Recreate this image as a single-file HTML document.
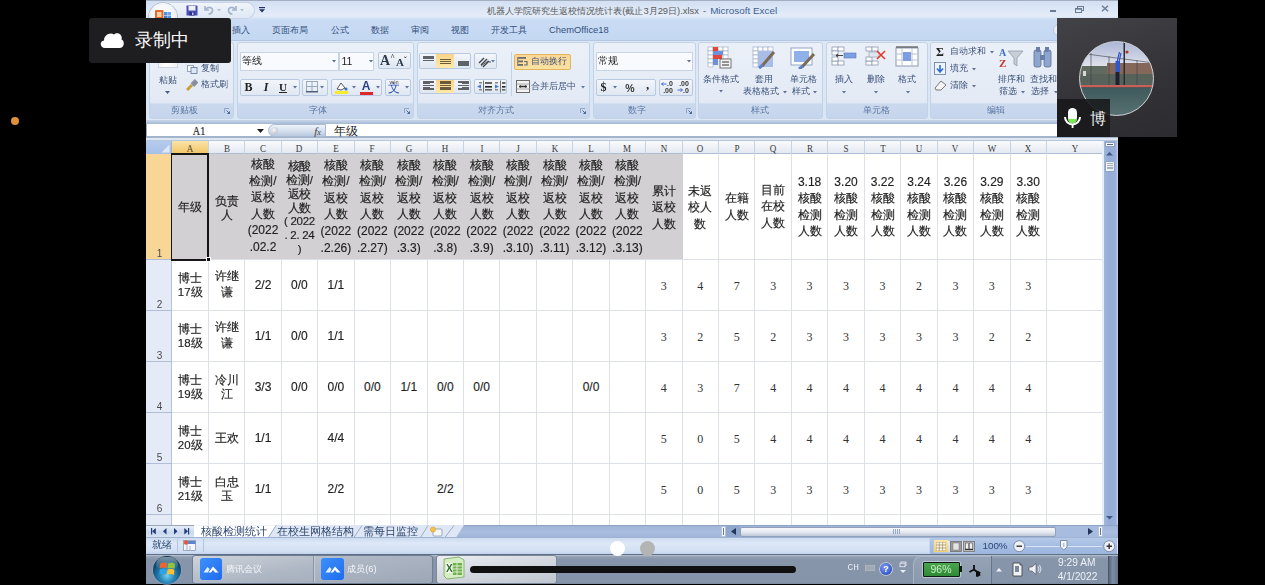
<!DOCTYPE html><html><head><meta charset="utf-8"><style>html,body{margin:0;padding:0}body{width:1265px;height:585px;overflow:hidden;position:relative;background:#000;font-family:"Liberation Sans",sans-serif}</style></head><body><div style="position:absolute;left:0;top:0;width:1265px;height:585px;overflow:hidden;filter:blur(0.35px)"><div style="position:absolute;left:146px;top:0px;width:971.5px;height:19px;background:linear-gradient(#a3afc0 0,#a3afc0 0.8px,#d3e0f3 1.5px,#dbe6f6 8px,#e4ecf8 16px,#d2e0f3 19px);"></div>
<div style="position:absolute;left:146px;top:19px;width:971.5px;height:22px;background:linear-gradient(#cbdcf4,#c4d8f3);border-bottom:1px solid #b3c7e3;box-sizing:border-box;"></div>
<div style="position:absolute;left:146px;top:41px;width:971.5px;height:79px;background:linear-gradient(#dde8f5,#d9e6f5);"></div>
<div style="position:absolute;left:146px;top:119px;width:971.5px;height:22px;background:linear-gradient(#dce8f6 0,#dce8f6 1px,#c3d2e7 1.5px,#aabdd7 4.5px,#fff 4.6px,#fff 17.4px,#a3b5cc 17.5px,#a3b5cc 18.5px,#e2e9f3 18.6px,#dde6f1 21px,#b8c7db 21.1px);"></div>
<div style="position:absolute;left:146px;top:124px;width:0.6px;height:13px;background:#9aaabf;"></div>
<div style="position:absolute;left:146px;top:141px;width:971.5px;height:13px;background:linear-gradient(#f9fafc,#e4e9f1);border-bottom:1px solid #aebfd6;box-sizing:border-box;"></div>
<div style="position:absolute;left:172px;top:154px;width:931px;height:371px;background:#fff;"></div>
<div style="position:absolute;left:146px;top:154px;width:26px;height:371px;background:#e4ebf6;border-right:1px solid #b3c3da;box-sizing:border-box;"></div>
<div style="position:absolute;left:171.6px;top:154px;width:511.19999999999993px;height:105.39999999999998px;background:#d2d0d2;"></div>
<div style="position:absolute;left:208.3px;top:259.4px;width:1px;height:265.6px;background:#dde0e7;"></div>
<div style="position:absolute;left:244.3px;top:259.4px;width:1px;height:265.6px;background:#dde0e7;"></div>
<div style="position:absolute;left:280.74px;top:259.4px;width:1px;height:265.6px;background:#dde0e7;"></div>
<div style="position:absolute;left:317.18px;top:259.4px;width:1px;height:265.6px;background:#dde0e7;"></div>
<div style="position:absolute;left:353.62px;top:259.4px;width:1px;height:265.6px;background:#dde0e7;"></div>
<div style="position:absolute;left:390.06px;top:259.4px;width:1px;height:265.6px;background:#dde0e7;"></div>
<div style="position:absolute;left:426.5px;top:259.4px;width:1px;height:265.6px;background:#dde0e7;"></div>
<div style="position:absolute;left:462.94px;top:259.4px;width:1px;height:265.6px;background:#dde0e7;"></div>
<div style="position:absolute;left:499.38px;top:259.4px;width:1px;height:265.6px;background:#dde0e7;"></div>
<div style="position:absolute;left:535.82px;top:259.4px;width:1px;height:265.6px;background:#dde0e7;"></div>
<div style="position:absolute;left:572.26px;top:259.4px;width:1px;height:265.6px;background:#dde0e7;"></div>
<div style="position:absolute;left:608.7px;top:259.4px;width:1px;height:265.6px;background:#dde0e7;"></div>
<div style="position:absolute;left:645.14px;top:259.4px;width:1px;height:265.6px;background:#dde0e7;"></div>
<div style="position:absolute;left:681.58px;top:259.4px;width:1px;height:265.6px;background:#dde0e7;"></div>
<div style="position:absolute;left:718.02px;top:154px;width:1px;height:371px;background:#dde0e7;"></div>
<div style="position:absolute;left:754.46px;top:154px;width:1px;height:371px;background:#dde0e7;"></div>
<div style="position:absolute;left:790.9px;top:154px;width:1px;height:371px;background:#dde0e7;"></div>
<div style="position:absolute;left:827.34px;top:154px;width:1px;height:371px;background:#dde0e7;"></div>
<div style="position:absolute;left:863.78px;top:154px;width:1px;height:371px;background:#dde0e7;"></div>
<div style="position:absolute;left:900.22px;top:154px;width:1px;height:371px;background:#dde0e7;"></div>
<div style="position:absolute;left:936.66px;top:154px;width:1px;height:371px;background:#dde0e7;"></div>
<div style="position:absolute;left:973.1px;top:154px;width:1px;height:371px;background:#dde0e7;"></div>
<div style="position:absolute;left:1009.54px;top:154px;width:1px;height:371px;background:#dde0e7;"></div>
<div style="position:absolute;left:1045.98px;top:154px;width:1px;height:371px;background:#dde0e7;"></div>
<div style="position:absolute;left:172px;top:258.9px;width:931px;height:1px;background:#dde0e7;"></div>
<div style="position:absolute;left:172px;top:309.9px;width:931px;height:1px;background:#dde0e7;"></div>
<div style="position:absolute;left:172px;top:360.9px;width:931px;height:1px;background:#dde0e7;"></div>
<div style="position:absolute;left:172px;top:411.9px;width:931px;height:1px;background:#dde0e7;"></div>
<div style="position:absolute;left:172px;top:462.9px;width:931px;height:1px;background:#dde0e7;"></div>
<div style="position:absolute;left:172px;top:513.9px;width:931px;height:1px;background:#dde0e7;"></div>
<div style="position:absolute;left:171.6px;top:141px;width:37.20000000000002px;height:13px;background:linear-gradient(#fbe3a8,#f2c76a);border-bottom:1px solid #c99a4a;box-sizing:border-box;"></div>
<div style="position:absolute;left:208.3px;top:141px;width:1px;height:13px;background:#c5d3e6;"></div>
<div style="position:absolute;left:190.2px;top:147.9px;white-space:nowrap;line-height:1;transform:translate(-50%,-50%) scaleX(0.82);font-family:'Liberation Serif',serif;font-size:11px;color:#3a3a3a;color:#5a4a2a;">A</div>
<div style="position:absolute;left:244.3px;top:141px;width:1px;height:13px;background:#c5d3e6;"></div>
<div style="position:absolute;left:226.8px;top:147.9px;white-space:nowrap;line-height:1;transform:translate(-50%,-50%) scaleX(0.82);font-family:'Liberation Serif',serif;font-size:11px;color:#3a3a3a;">B</div>
<div style="position:absolute;left:280.74px;top:141px;width:1px;height:13px;background:#c5d3e6;"></div>
<div style="position:absolute;left:263.02px;top:147.9px;white-space:nowrap;line-height:1;transform:translate(-50%,-50%) scaleX(0.82);font-family:'Liberation Serif',serif;font-size:11px;color:#3a3a3a;">C</div>
<div style="position:absolute;left:317.18px;top:141px;width:1px;height:13px;background:#c5d3e6;"></div>
<div style="position:absolute;left:299.46000000000004px;top:147.9px;white-space:nowrap;line-height:1;transform:translate(-50%,-50%) scaleX(0.82);font-family:'Liberation Serif',serif;font-size:11px;color:#3a3a3a;">D</div>
<div style="position:absolute;left:353.62px;top:141px;width:1px;height:13px;background:#c5d3e6;"></div>
<div style="position:absolute;left:335.9px;top:147.9px;white-space:nowrap;line-height:1;transform:translate(-50%,-50%) scaleX(0.82);font-family:'Liberation Serif',serif;font-size:11px;color:#3a3a3a;">E</div>
<div style="position:absolute;left:390.06px;top:141px;width:1px;height:13px;background:#c5d3e6;"></div>
<div style="position:absolute;left:372.34000000000003px;top:147.9px;white-space:nowrap;line-height:1;transform:translate(-50%,-50%) scaleX(0.82);font-family:'Liberation Serif',serif;font-size:11px;color:#3a3a3a;">F</div>
<div style="position:absolute;left:426.5px;top:141px;width:1px;height:13px;background:#c5d3e6;"></div>
<div style="position:absolute;left:408.78px;top:147.9px;white-space:nowrap;line-height:1;transform:translate(-50%,-50%) scaleX(0.82);font-family:'Liberation Serif',serif;font-size:11px;color:#3a3a3a;">G</div>
<div style="position:absolute;left:462.94px;top:141px;width:1px;height:13px;background:#c5d3e6;"></div>
<div style="position:absolute;left:445.22px;top:147.9px;white-space:nowrap;line-height:1;transform:translate(-50%,-50%) scaleX(0.82);font-family:'Liberation Serif',serif;font-size:11px;color:#3a3a3a;">H</div>
<div style="position:absolute;left:499.38px;top:141px;width:1px;height:13px;background:#c5d3e6;"></div>
<div style="position:absolute;left:481.65999999999997px;top:147.9px;white-space:nowrap;line-height:1;transform:translate(-50%,-50%) scaleX(0.82);font-family:'Liberation Serif',serif;font-size:11px;color:#3a3a3a;">I</div>
<div style="position:absolute;left:535.82px;top:141px;width:1px;height:13px;background:#c5d3e6;"></div>
<div style="position:absolute;left:518.1px;top:147.9px;white-space:nowrap;line-height:1;transform:translate(-50%,-50%) scaleX(0.82);font-family:'Liberation Serif',serif;font-size:11px;color:#3a3a3a;">J</div>
<div style="position:absolute;left:572.26px;top:141px;width:1px;height:13px;background:#c5d3e6;"></div>
<div style="position:absolute;left:554.54px;top:147.9px;white-space:nowrap;line-height:1;transform:translate(-50%,-50%) scaleX(0.82);font-family:'Liberation Serif',serif;font-size:11px;color:#3a3a3a;">K</div>
<div style="position:absolute;left:608.7px;top:141px;width:1px;height:13px;background:#c5d3e6;"></div>
<div style="position:absolute;left:590.98px;top:147.9px;white-space:nowrap;line-height:1;transform:translate(-50%,-50%) scaleX(0.82);font-family:'Liberation Serif',serif;font-size:11px;color:#3a3a3a;">L</div>
<div style="position:absolute;left:645.14px;top:141px;width:1px;height:13px;background:#c5d3e6;"></div>
<div style="position:absolute;left:627.4200000000001px;top:147.9px;white-space:nowrap;line-height:1;transform:translate(-50%,-50%) scaleX(0.82);font-family:'Liberation Serif',serif;font-size:11px;color:#3a3a3a;">M</div>
<div style="position:absolute;left:681.58px;top:141px;width:1px;height:13px;background:#c5d3e6;"></div>
<div style="position:absolute;left:663.86px;top:147.9px;white-space:nowrap;line-height:1;transform:translate(-50%,-50%) scaleX(0.82);font-family:'Liberation Serif',serif;font-size:11px;color:#3a3a3a;">N</div>
<div style="position:absolute;left:718.02px;top:141px;width:1px;height:13px;background:#c5d3e6;"></div>
<div style="position:absolute;left:700.3px;top:147.9px;white-space:nowrap;line-height:1;transform:translate(-50%,-50%) scaleX(0.82);font-family:'Liberation Serif',serif;font-size:11px;color:#3a3a3a;">O</div>
<div style="position:absolute;left:754.46px;top:141px;width:1px;height:13px;background:#c5d3e6;"></div>
<div style="position:absolute;left:736.74px;top:147.9px;white-space:nowrap;line-height:1;transform:translate(-50%,-50%) scaleX(0.82);font-family:'Liberation Serif',serif;font-size:11px;color:#3a3a3a;">P</div>
<div style="position:absolute;left:790.9px;top:141px;width:1px;height:13px;background:#c5d3e6;"></div>
<div style="position:absolute;left:773.1800000000001px;top:147.9px;white-space:nowrap;line-height:1;transform:translate(-50%,-50%) scaleX(0.82);font-family:'Liberation Serif',serif;font-size:11px;color:#3a3a3a;">Q</div>
<div style="position:absolute;left:827.34px;top:141px;width:1px;height:13px;background:#c5d3e6;"></div>
<div style="position:absolute;left:809.62px;top:147.9px;white-space:nowrap;line-height:1;transform:translate(-50%,-50%) scaleX(0.82);font-family:'Liberation Serif',serif;font-size:11px;color:#3a3a3a;">R</div>
<div style="position:absolute;left:863.78px;top:141px;width:1px;height:13px;background:#c5d3e6;"></div>
<div style="position:absolute;left:846.06px;top:147.9px;white-space:nowrap;line-height:1;transform:translate(-50%,-50%) scaleX(0.82);font-family:'Liberation Serif',serif;font-size:11px;color:#3a3a3a;">S</div>
<div style="position:absolute;left:900.22px;top:141px;width:1px;height:13px;background:#c5d3e6;"></div>
<div style="position:absolute;left:882.5px;top:147.9px;white-space:nowrap;line-height:1;transform:translate(-50%,-50%) scaleX(0.82);font-family:'Liberation Serif',serif;font-size:11px;color:#3a3a3a;">T</div>
<div style="position:absolute;left:936.66px;top:141px;width:1px;height:13px;background:#c5d3e6;"></div>
<div style="position:absolute;left:918.94px;top:147.9px;white-space:nowrap;line-height:1;transform:translate(-50%,-50%) scaleX(0.82);font-family:'Liberation Serif',serif;font-size:11px;color:#3a3a3a;">U</div>
<div style="position:absolute;left:973.1px;top:141px;width:1px;height:13px;background:#c5d3e6;"></div>
<div style="position:absolute;left:955.38px;top:147.9px;white-space:nowrap;line-height:1;transform:translate(-50%,-50%) scaleX(0.82);font-family:'Liberation Serif',serif;font-size:11px;color:#3a3a3a;">V</div>
<div style="position:absolute;left:1009.54px;top:141px;width:1px;height:13px;background:#c5d3e6;"></div>
<div style="position:absolute;left:991.8199999999999px;top:147.9px;white-space:nowrap;line-height:1;transform:translate(-50%,-50%) scaleX(0.82);font-family:'Liberation Serif',serif;font-size:11px;color:#3a3a3a;">W</div>
<div style="position:absolute;left:1045.98px;top:141px;width:1px;height:13px;background:#c5d3e6;"></div>
<div style="position:absolute;left:1028.26px;top:147.9px;white-space:nowrap;line-height:1;transform:translate(-50%,-50%) scaleX(0.82);font-family:'Liberation Serif',serif;font-size:11px;color:#3a3a3a;">X</div>
<div style="position:absolute;left:1102.9px;top:141px;width:1px;height:13px;background:#c5d3e6;"></div>
<div style="position:absolute;left:1074.94px;top:147.9px;white-space:nowrap;line-height:1;transform:translate(-50%,-50%) scaleX(0.82);font-family:'Liberation Serif',serif;font-size:11px;color:#3a3a3a;">Y</div>
<div style="position:absolute;left:146px;top:141px;width:26px;height:13px;background:linear-gradient(#b4cbec,#a6c0e8);border-right:1px solid #9eb5d2;box-sizing:border-box;"></div>
<svg style="position:absolute;left:161px;top:143.5px" width="9" height="9"><polygon points="8.5,0.5 8.5,8.5 0.5,8.5" fill="#dfe8f6"/></svg>
<div style="position:absolute;left:146px;top:154px;width:25px;height:105.39999999999998px;background:#f8d796;"></div>
<div style="position:absolute;left:146px;top:258.9px;width:26px;height:1px;background:#b0bfd6;"></div>
<div style="position:absolute;left:159.5px;top:253.89999999999998px;white-space:nowrap;line-height:1;transform:translate(-50%,-50%);font-family:'Liberation Sans',sans-serif;font-size:10px;color:#4a4a4a;">1</div>
<div style="position:absolute;left:146px;top:309.9px;width:26px;height:1px;background:#b0bfd6;"></div>
<div style="position:absolute;left:159.5px;top:304.9px;white-space:nowrap;line-height:1;transform:translate(-50%,-50%);font-family:'Liberation Sans',sans-serif;font-size:10px;color:#4a4a4a;">2</div>
<div style="position:absolute;left:146px;top:360.9px;width:26px;height:1px;background:#b0bfd6;"></div>
<div style="position:absolute;left:159.5px;top:355.9px;white-space:nowrap;line-height:1;transform:translate(-50%,-50%);font-family:'Liberation Sans',sans-serif;font-size:10px;color:#4a4a4a;">3</div>
<div style="position:absolute;left:146px;top:411.9px;width:26px;height:1px;background:#b0bfd6;"></div>
<div style="position:absolute;left:159.5px;top:406.9px;white-space:nowrap;line-height:1;transform:translate(-50%,-50%);font-family:'Liberation Sans',sans-serif;font-size:10px;color:#4a4a4a;">4</div>
<div style="position:absolute;left:146px;top:462.9px;width:26px;height:1px;background:#b0bfd6;"></div>
<div style="position:absolute;left:159.5px;top:457.9px;white-space:nowrap;line-height:1;transform:translate(-50%,-50%);font-family:'Liberation Sans',sans-serif;font-size:10px;color:#4a4a4a;">5</div>
<div style="position:absolute;left:146px;top:513.9px;width:26px;height:1px;background:#b0bfd6;"></div>
<div style="position:absolute;left:159.5px;top:508.9px;white-space:nowrap;line-height:1;transform:translate(-50%,-50%);font-family:'Liberation Sans',sans-serif;font-size:10px;color:#4a4a4a;">6</div>
<div style="position:absolute;left:146px;top:524.5px;width:26px;height:1px;background:#b0bfd6;"></div>
<div style="position:absolute;left:171.29999999999998px;top:153.2px;width:38.000000000000014px;height:107.49999999999999px;border:2px solid #161616;border-left-width:1.6px;box-sizing:border-box;"></div>
<div style="position:absolute;left:206.3px;top:256.9px;width:5px;height:5px;background:#111;border:1px solid #fff;box-sizing:border-box;"></div>
<div style="position:absolute;left:190.2px;top:206.5px;white-space:nowrap;line-height:1;transform:translate(-50%,-50%);font-family:'Liberation Sans',sans-serif;font-size:12px;color:#1e1e1e;-webkit-text-stroke:0.2px rgba(30,30,30,0.8);">年级</div>
<div style="position:absolute;left:226.8px;top:200.8px;white-space:nowrap;line-height:1;transform:translate(-50%,-50%);font-family:'Liberation Sans',sans-serif;font-size:12px;color:#1e1e1e;-webkit-text-stroke:0.2px rgba(30,30,30,0.8);">负责</div>
<div style="position:absolute;left:226.8px;top:215.2px;white-space:nowrap;line-height:1;transform:translate(-50%,-50%);font-family:'Liberation Sans',sans-serif;font-size:12px;color:#1e1e1e;-webkit-text-stroke:0.2px rgba(30,30,30,0.8);">人</div>
<div style="position:absolute;left:263.02px;top:164.0px;white-space:nowrap;line-height:1;transform:translate(-50%,-50%);font-family:'Liberation Sans',sans-serif;font-size:12px;color:#1e1e1e;-webkit-text-stroke:0.2px rgba(30,30,30,0.8);">核酸</div>
<div style="position:absolute;left:263.02px;top:180.6px;white-space:nowrap;line-height:1;transform:translate(-50%,-50%);font-family:'Liberation Sans',sans-serif;font-size:12px;color:#1e1e1e;-webkit-text-stroke:0.2px rgba(30,30,30,0.8);">检测/</div>
<div style="position:absolute;left:263.02px;top:197.2px;white-space:nowrap;line-height:1;transform:translate(-50%,-50%);font-family:'Liberation Sans',sans-serif;font-size:12px;color:#1e1e1e;-webkit-text-stroke:0.2px rgba(30,30,30,0.8);">返校</div>
<div style="position:absolute;left:263.02px;top:213.8px;white-space:nowrap;line-height:1;transform:translate(-50%,-50%);font-family:'Liberation Sans',sans-serif;font-size:12px;color:#1e1e1e;-webkit-text-stroke:0.2px rgba(30,30,30,0.8);">人数</div>
<div style="position:absolute;left:263.02px;top:230.4px;white-space:nowrap;line-height:1;transform:translate(-50%,-50%);font-family:'Liberation Sans',sans-serif;font-size:12px;color:#1e1e1e;-webkit-text-stroke:0.2px rgba(30,30,30,0.8);">(2022</div>
<div style="position:absolute;left:263.02px;top:247.0px;white-space:nowrap;line-height:1;transform:translate(-50%,-50%);font-family:'Liberation Sans',sans-serif;font-size:12px;color:#1e1e1e;-webkit-text-stroke:0.2px rgba(30,30,30,0.8);">.02.2</div>
<div style="position:absolute;left:299.46000000000004px;top:167.4px;white-space:nowrap;line-height:1;transform:translate(-50%,-50%);font-family:'Liberation Sans',sans-serif;font-size:12px;color:#1e1e1e;-webkit-text-stroke:0.2px rgba(30,30,30,0.8);font-size:11.5px;letter-spacing:-0.3px;">核酸</div>
<div style="position:absolute;left:299.46000000000004px;top:181.1px;white-space:nowrap;line-height:1;transform:translate(-50%,-50%);font-family:'Liberation Sans',sans-serif;font-size:12px;color:#1e1e1e;-webkit-text-stroke:0.2px rgba(30,30,30,0.8);font-size:11.5px;letter-spacing:-0.3px;">检测/</div>
<div style="position:absolute;left:299.46000000000004px;top:194.8px;white-space:nowrap;line-height:1;transform:translate(-50%,-50%);font-family:'Liberation Sans',sans-serif;font-size:12px;color:#1e1e1e;-webkit-text-stroke:0.2px rgba(30,30,30,0.8);font-size:11.5px;letter-spacing:-0.3px;">返校</div>
<div style="position:absolute;left:299.46000000000004px;top:208.5px;white-space:nowrap;line-height:1;transform:translate(-50%,-50%);font-family:'Liberation Sans',sans-serif;font-size:12px;color:#1e1e1e;-webkit-text-stroke:0.2px rgba(30,30,30,0.8);font-size:11.5px;letter-spacing:-0.3px;">人数</div>
<div style="position:absolute;left:299.46000000000004px;top:222.2px;white-space:nowrap;line-height:1;transform:translate(-50%,-50%);font-family:'Liberation Sans',sans-serif;font-size:12px;color:#1e1e1e;-webkit-text-stroke:0.2px rgba(30,30,30,0.8);font-size:11.5px;letter-spacing:-0.3px;">(&nbsp;2022</div>
<div style="position:absolute;left:299.46000000000004px;top:235.9px;white-space:nowrap;line-height:1;transform:translate(-50%,-50%);font-family:'Liberation Sans',sans-serif;font-size:12px;color:#1e1e1e;-webkit-text-stroke:0.2px rgba(30,30,30,0.8);font-size:11.5px;letter-spacing:-0.3px;">.&nbsp;2.&nbsp;24</div>
<div style="position:absolute;left:299.46000000000004px;top:249.6px;white-space:nowrap;line-height:1;transform:translate(-50%,-50%);font-family:'Liberation Sans',sans-serif;font-size:12px;color:#1e1e1e;-webkit-text-stroke:0.2px rgba(30,30,30,0.8);font-size:11.5px;letter-spacing:-0.3px;">)</div>
<div style="position:absolute;left:335.9px;top:164.5px;white-space:nowrap;line-height:1;transform:translate(-50%,-50%);font-family:'Liberation Sans',sans-serif;font-size:12px;color:#1e1e1e;-webkit-text-stroke:0.2px rgba(30,30,30,0.8);">核酸</div>
<div style="position:absolute;left:335.9px;top:181.1px;white-space:nowrap;line-height:1;transform:translate(-50%,-50%);font-family:'Liberation Sans',sans-serif;font-size:12px;color:#1e1e1e;-webkit-text-stroke:0.2px rgba(30,30,30,0.8);">检测/</div>
<div style="position:absolute;left:335.9px;top:197.7px;white-space:nowrap;line-height:1;transform:translate(-50%,-50%);font-family:'Liberation Sans',sans-serif;font-size:12px;color:#1e1e1e;-webkit-text-stroke:0.2px rgba(30,30,30,0.8);">返校</div>
<div style="position:absolute;left:335.9px;top:214.3px;white-space:nowrap;line-height:1;transform:translate(-50%,-50%);font-family:'Liberation Sans',sans-serif;font-size:12px;color:#1e1e1e;-webkit-text-stroke:0.2px rgba(30,30,30,0.8);">人数</div>
<div style="position:absolute;left:335.9px;top:230.9px;white-space:nowrap;line-height:1;transform:translate(-50%,-50%);font-family:'Liberation Sans',sans-serif;font-size:12px;color:#1e1e1e;-webkit-text-stroke:0.2px rgba(30,30,30,0.8);">(2022</div>
<div style="position:absolute;left:335.9px;top:247.5px;white-space:nowrap;line-height:1;transform:translate(-50%,-50%);font-family:'Liberation Sans',sans-serif;font-size:12px;color:#1e1e1e;-webkit-text-stroke:0.2px rgba(30,30,30,0.8);">.2.26)</div>
<div style="position:absolute;left:372.34000000000003px;top:164.5px;white-space:nowrap;line-height:1;transform:translate(-50%,-50%);font-family:'Liberation Sans',sans-serif;font-size:12px;color:#1e1e1e;-webkit-text-stroke:0.2px rgba(30,30,30,0.8);">核酸</div>
<div style="position:absolute;left:372.34000000000003px;top:181.1px;white-space:nowrap;line-height:1;transform:translate(-50%,-50%);font-family:'Liberation Sans',sans-serif;font-size:12px;color:#1e1e1e;-webkit-text-stroke:0.2px rgba(30,30,30,0.8);">检测/</div>
<div style="position:absolute;left:372.34000000000003px;top:197.7px;white-space:nowrap;line-height:1;transform:translate(-50%,-50%);font-family:'Liberation Sans',sans-serif;font-size:12px;color:#1e1e1e;-webkit-text-stroke:0.2px rgba(30,30,30,0.8);">返校</div>
<div style="position:absolute;left:372.34000000000003px;top:214.3px;white-space:nowrap;line-height:1;transform:translate(-50%,-50%);font-family:'Liberation Sans',sans-serif;font-size:12px;color:#1e1e1e;-webkit-text-stroke:0.2px rgba(30,30,30,0.8);">人数</div>
<div style="position:absolute;left:372.34000000000003px;top:230.9px;white-space:nowrap;line-height:1;transform:translate(-50%,-50%);font-family:'Liberation Sans',sans-serif;font-size:12px;color:#1e1e1e;-webkit-text-stroke:0.2px rgba(30,30,30,0.8);">(2022</div>
<div style="position:absolute;left:372.34000000000003px;top:247.5px;white-space:nowrap;line-height:1;transform:translate(-50%,-50%);font-family:'Liberation Sans',sans-serif;font-size:12px;color:#1e1e1e;-webkit-text-stroke:0.2px rgba(30,30,30,0.8);">.2.27)</div>
<div style="position:absolute;left:408.78px;top:164.5px;white-space:nowrap;line-height:1;transform:translate(-50%,-50%);font-family:'Liberation Sans',sans-serif;font-size:12px;color:#1e1e1e;-webkit-text-stroke:0.2px rgba(30,30,30,0.8);">核酸</div>
<div style="position:absolute;left:408.78px;top:181.1px;white-space:nowrap;line-height:1;transform:translate(-50%,-50%);font-family:'Liberation Sans',sans-serif;font-size:12px;color:#1e1e1e;-webkit-text-stroke:0.2px rgba(30,30,30,0.8);">检测/</div>
<div style="position:absolute;left:408.78px;top:197.7px;white-space:nowrap;line-height:1;transform:translate(-50%,-50%);font-family:'Liberation Sans',sans-serif;font-size:12px;color:#1e1e1e;-webkit-text-stroke:0.2px rgba(30,30,30,0.8);">返校</div>
<div style="position:absolute;left:408.78px;top:214.3px;white-space:nowrap;line-height:1;transform:translate(-50%,-50%);font-family:'Liberation Sans',sans-serif;font-size:12px;color:#1e1e1e;-webkit-text-stroke:0.2px rgba(30,30,30,0.8);">人数</div>
<div style="position:absolute;left:408.78px;top:230.9px;white-space:nowrap;line-height:1;transform:translate(-50%,-50%);font-family:'Liberation Sans',sans-serif;font-size:12px;color:#1e1e1e;-webkit-text-stroke:0.2px rgba(30,30,30,0.8);">(2022</div>
<div style="position:absolute;left:408.78px;top:247.5px;white-space:nowrap;line-height:1;transform:translate(-50%,-50%);font-family:'Liberation Sans',sans-serif;font-size:12px;color:#1e1e1e;-webkit-text-stroke:0.2px rgba(30,30,30,0.8);">.3.3)</div>
<div style="position:absolute;left:445.22px;top:164.5px;white-space:nowrap;line-height:1;transform:translate(-50%,-50%);font-family:'Liberation Sans',sans-serif;font-size:12px;color:#1e1e1e;-webkit-text-stroke:0.2px rgba(30,30,30,0.8);">核酸</div>
<div style="position:absolute;left:445.22px;top:181.1px;white-space:nowrap;line-height:1;transform:translate(-50%,-50%);font-family:'Liberation Sans',sans-serif;font-size:12px;color:#1e1e1e;-webkit-text-stroke:0.2px rgba(30,30,30,0.8);">检测/</div>
<div style="position:absolute;left:445.22px;top:197.7px;white-space:nowrap;line-height:1;transform:translate(-50%,-50%);font-family:'Liberation Sans',sans-serif;font-size:12px;color:#1e1e1e;-webkit-text-stroke:0.2px rgba(30,30,30,0.8);">返校</div>
<div style="position:absolute;left:445.22px;top:214.3px;white-space:nowrap;line-height:1;transform:translate(-50%,-50%);font-family:'Liberation Sans',sans-serif;font-size:12px;color:#1e1e1e;-webkit-text-stroke:0.2px rgba(30,30,30,0.8);">人数</div>
<div style="position:absolute;left:445.22px;top:230.9px;white-space:nowrap;line-height:1;transform:translate(-50%,-50%);font-family:'Liberation Sans',sans-serif;font-size:12px;color:#1e1e1e;-webkit-text-stroke:0.2px rgba(30,30,30,0.8);">(2022</div>
<div style="position:absolute;left:445.22px;top:247.5px;white-space:nowrap;line-height:1;transform:translate(-50%,-50%);font-family:'Liberation Sans',sans-serif;font-size:12px;color:#1e1e1e;-webkit-text-stroke:0.2px rgba(30,30,30,0.8);">.3.8)</div>
<div style="position:absolute;left:481.65999999999997px;top:164.5px;white-space:nowrap;line-height:1;transform:translate(-50%,-50%);font-family:'Liberation Sans',sans-serif;font-size:12px;color:#1e1e1e;-webkit-text-stroke:0.2px rgba(30,30,30,0.8);">核酸</div>
<div style="position:absolute;left:481.65999999999997px;top:181.1px;white-space:nowrap;line-height:1;transform:translate(-50%,-50%);font-family:'Liberation Sans',sans-serif;font-size:12px;color:#1e1e1e;-webkit-text-stroke:0.2px rgba(30,30,30,0.8);">检测/</div>
<div style="position:absolute;left:481.65999999999997px;top:197.7px;white-space:nowrap;line-height:1;transform:translate(-50%,-50%);font-family:'Liberation Sans',sans-serif;font-size:12px;color:#1e1e1e;-webkit-text-stroke:0.2px rgba(30,30,30,0.8);">返校</div>
<div style="position:absolute;left:481.65999999999997px;top:214.3px;white-space:nowrap;line-height:1;transform:translate(-50%,-50%);font-family:'Liberation Sans',sans-serif;font-size:12px;color:#1e1e1e;-webkit-text-stroke:0.2px rgba(30,30,30,0.8);">人数</div>
<div style="position:absolute;left:481.65999999999997px;top:230.9px;white-space:nowrap;line-height:1;transform:translate(-50%,-50%);font-family:'Liberation Sans',sans-serif;font-size:12px;color:#1e1e1e;-webkit-text-stroke:0.2px rgba(30,30,30,0.8);">(2022</div>
<div style="position:absolute;left:481.65999999999997px;top:247.5px;white-space:nowrap;line-height:1;transform:translate(-50%,-50%);font-family:'Liberation Sans',sans-serif;font-size:12px;color:#1e1e1e;-webkit-text-stroke:0.2px rgba(30,30,30,0.8);">.3.9)</div>
<div style="position:absolute;left:518.1px;top:164.5px;white-space:nowrap;line-height:1;transform:translate(-50%,-50%);font-family:'Liberation Sans',sans-serif;font-size:12px;color:#1e1e1e;-webkit-text-stroke:0.2px rgba(30,30,30,0.8);">核酸</div>
<div style="position:absolute;left:518.1px;top:181.1px;white-space:nowrap;line-height:1;transform:translate(-50%,-50%);font-family:'Liberation Sans',sans-serif;font-size:12px;color:#1e1e1e;-webkit-text-stroke:0.2px rgba(30,30,30,0.8);">检测/</div>
<div style="position:absolute;left:518.1px;top:197.7px;white-space:nowrap;line-height:1;transform:translate(-50%,-50%);font-family:'Liberation Sans',sans-serif;font-size:12px;color:#1e1e1e;-webkit-text-stroke:0.2px rgba(30,30,30,0.8);">返校</div>
<div style="position:absolute;left:518.1px;top:214.3px;white-space:nowrap;line-height:1;transform:translate(-50%,-50%);font-family:'Liberation Sans',sans-serif;font-size:12px;color:#1e1e1e;-webkit-text-stroke:0.2px rgba(30,30,30,0.8);">人数</div>
<div style="position:absolute;left:518.1px;top:230.9px;white-space:nowrap;line-height:1;transform:translate(-50%,-50%);font-family:'Liberation Sans',sans-serif;font-size:12px;color:#1e1e1e;-webkit-text-stroke:0.2px rgba(30,30,30,0.8);">(2022</div>
<div style="position:absolute;left:518.1px;top:247.5px;white-space:nowrap;line-height:1;transform:translate(-50%,-50%);font-family:'Liberation Sans',sans-serif;font-size:12px;color:#1e1e1e;-webkit-text-stroke:0.2px rgba(30,30,30,0.8);">.3.10)</div>
<div style="position:absolute;left:554.54px;top:164.5px;white-space:nowrap;line-height:1;transform:translate(-50%,-50%);font-family:'Liberation Sans',sans-serif;font-size:12px;color:#1e1e1e;-webkit-text-stroke:0.2px rgba(30,30,30,0.8);">核酸</div>
<div style="position:absolute;left:554.54px;top:181.1px;white-space:nowrap;line-height:1;transform:translate(-50%,-50%);font-family:'Liberation Sans',sans-serif;font-size:12px;color:#1e1e1e;-webkit-text-stroke:0.2px rgba(30,30,30,0.8);">检测/</div>
<div style="position:absolute;left:554.54px;top:197.7px;white-space:nowrap;line-height:1;transform:translate(-50%,-50%);font-family:'Liberation Sans',sans-serif;font-size:12px;color:#1e1e1e;-webkit-text-stroke:0.2px rgba(30,30,30,0.8);">返校</div>
<div style="position:absolute;left:554.54px;top:214.3px;white-space:nowrap;line-height:1;transform:translate(-50%,-50%);font-family:'Liberation Sans',sans-serif;font-size:12px;color:#1e1e1e;-webkit-text-stroke:0.2px rgba(30,30,30,0.8);">人数</div>
<div style="position:absolute;left:554.54px;top:230.9px;white-space:nowrap;line-height:1;transform:translate(-50%,-50%);font-family:'Liberation Sans',sans-serif;font-size:12px;color:#1e1e1e;-webkit-text-stroke:0.2px rgba(30,30,30,0.8);">(2022</div>
<div style="position:absolute;left:554.54px;top:247.5px;white-space:nowrap;line-height:1;transform:translate(-50%,-50%);font-family:'Liberation Sans',sans-serif;font-size:12px;color:#1e1e1e;-webkit-text-stroke:0.2px rgba(30,30,30,0.8);">.3.11)</div>
<div style="position:absolute;left:590.98px;top:164.5px;white-space:nowrap;line-height:1;transform:translate(-50%,-50%);font-family:'Liberation Sans',sans-serif;font-size:12px;color:#1e1e1e;-webkit-text-stroke:0.2px rgba(30,30,30,0.8);">核酸</div>
<div style="position:absolute;left:590.98px;top:181.1px;white-space:nowrap;line-height:1;transform:translate(-50%,-50%);font-family:'Liberation Sans',sans-serif;font-size:12px;color:#1e1e1e;-webkit-text-stroke:0.2px rgba(30,30,30,0.8);">检测/</div>
<div style="position:absolute;left:590.98px;top:197.7px;white-space:nowrap;line-height:1;transform:translate(-50%,-50%);font-family:'Liberation Sans',sans-serif;font-size:12px;color:#1e1e1e;-webkit-text-stroke:0.2px rgba(30,30,30,0.8);">返校</div>
<div style="position:absolute;left:590.98px;top:214.3px;white-space:nowrap;line-height:1;transform:translate(-50%,-50%);font-family:'Liberation Sans',sans-serif;font-size:12px;color:#1e1e1e;-webkit-text-stroke:0.2px rgba(30,30,30,0.8);">人数</div>
<div style="position:absolute;left:590.98px;top:230.9px;white-space:nowrap;line-height:1;transform:translate(-50%,-50%);font-family:'Liberation Sans',sans-serif;font-size:12px;color:#1e1e1e;-webkit-text-stroke:0.2px rgba(30,30,30,0.8);">(2022</div>
<div style="position:absolute;left:590.98px;top:247.5px;white-space:nowrap;line-height:1;transform:translate(-50%,-50%);font-family:'Liberation Sans',sans-serif;font-size:12px;color:#1e1e1e;-webkit-text-stroke:0.2px rgba(30,30,30,0.8);">.3.12)</div>
<div style="position:absolute;left:627.4200000000001px;top:164.5px;white-space:nowrap;line-height:1;transform:translate(-50%,-50%);font-family:'Liberation Sans',sans-serif;font-size:12px;color:#1e1e1e;-webkit-text-stroke:0.2px rgba(30,30,30,0.8);">核酸</div>
<div style="position:absolute;left:627.4200000000001px;top:181.1px;white-space:nowrap;line-height:1;transform:translate(-50%,-50%);font-family:'Liberation Sans',sans-serif;font-size:12px;color:#1e1e1e;-webkit-text-stroke:0.2px rgba(30,30,30,0.8);">检测/</div>
<div style="position:absolute;left:627.4200000000001px;top:197.7px;white-space:nowrap;line-height:1;transform:translate(-50%,-50%);font-family:'Liberation Sans',sans-serif;font-size:12px;color:#1e1e1e;-webkit-text-stroke:0.2px rgba(30,30,30,0.8);">返校</div>
<div style="position:absolute;left:627.4200000000001px;top:214.3px;white-space:nowrap;line-height:1;transform:translate(-50%,-50%);font-family:'Liberation Sans',sans-serif;font-size:12px;color:#1e1e1e;-webkit-text-stroke:0.2px rgba(30,30,30,0.8);">人数</div>
<div style="position:absolute;left:627.4200000000001px;top:230.9px;white-space:nowrap;line-height:1;transform:translate(-50%,-50%);font-family:'Liberation Sans',sans-serif;font-size:12px;color:#1e1e1e;-webkit-text-stroke:0.2px rgba(30,30,30,0.8);">(2022</div>
<div style="position:absolute;left:627.4200000000001px;top:247.5px;white-space:nowrap;line-height:1;transform:translate(-50%,-50%);font-family:'Liberation Sans',sans-serif;font-size:12px;color:#1e1e1e;-webkit-text-stroke:0.2px rgba(30,30,30,0.8);">.3.13)</div>
<div style="position:absolute;left:663.86px;top:190.70000000000002px;white-space:nowrap;line-height:1;transform:translate(-50%,-50%);font-family:'Liberation Sans',sans-serif;font-size:12px;color:#1e1e1e;-webkit-text-stroke:0.2px rgba(30,30,30,0.8);">累计</div>
<div style="position:absolute;left:663.86px;top:207.3px;white-space:nowrap;line-height:1;transform:translate(-50%,-50%);font-family:'Liberation Sans',sans-serif;font-size:12px;color:#1e1e1e;-webkit-text-stroke:0.2px rgba(30,30,30,0.8);">返校</div>
<div style="position:absolute;left:663.86px;top:223.9px;white-space:nowrap;line-height:1;transform:translate(-50%,-50%);font-family:'Liberation Sans',sans-serif;font-size:12px;color:#1e1e1e;-webkit-text-stroke:0.2px rgba(30,30,30,0.8);">人数</div>
<div style="position:absolute;left:700.3px;top:190.70000000000002px;white-space:nowrap;line-height:1;transform:translate(-50%,-50%);font-family:'Liberation Sans',sans-serif;font-size:12px;color:#1e1e1e;-webkit-text-stroke:0.2px rgba(30,30,30,0.8);">未返</div>
<div style="position:absolute;left:700.3px;top:207.3px;white-space:nowrap;line-height:1;transform:translate(-50%,-50%);font-family:'Liberation Sans',sans-serif;font-size:12px;color:#1e1e1e;-webkit-text-stroke:0.2px rgba(30,30,30,0.8);">校人</div>
<div style="position:absolute;left:700.3px;top:223.9px;white-space:nowrap;line-height:1;transform:translate(-50%,-50%);font-family:'Liberation Sans',sans-serif;font-size:12px;color:#1e1e1e;-webkit-text-stroke:0.2px rgba(30,30,30,0.8);">数</div>
<div style="position:absolute;left:736.74px;top:198.1px;white-space:nowrap;line-height:1;transform:translate(-50%,-50%);font-family:'Liberation Sans',sans-serif;font-size:12px;color:#1e1e1e;-webkit-text-stroke:0.2px rgba(30,30,30,0.8);">在籍</div>
<div style="position:absolute;left:736.74px;top:214.70000000000002px;white-space:nowrap;line-height:1;transform:translate(-50%,-50%);font-family:'Liberation Sans',sans-serif;font-size:12px;color:#1e1e1e;-webkit-text-stroke:0.2px rgba(30,30,30,0.8);">人数</div>
<div style="position:absolute;left:773.1800000000001px;top:189.8px;white-space:nowrap;line-height:1;transform:translate(-50%,-50%);font-family:'Liberation Sans',sans-serif;font-size:12px;color:#1e1e1e;-webkit-text-stroke:0.2px rgba(30,30,30,0.8);">目前</div>
<div style="position:absolute;left:773.1800000000001px;top:206.4px;white-space:nowrap;line-height:1;transform:translate(-50%,-50%);font-family:'Liberation Sans',sans-serif;font-size:12px;color:#1e1e1e;-webkit-text-stroke:0.2px rgba(30,30,30,0.8);">在校</div>
<div style="position:absolute;left:773.1800000000001px;top:223.0px;white-space:nowrap;line-height:1;transform:translate(-50%,-50%);font-family:'Liberation Sans',sans-serif;font-size:12px;color:#1e1e1e;-webkit-text-stroke:0.2px rgba(30,30,30,0.8);">人数</div>
<div style="position:absolute;left:809.62px;top:181.5px;white-space:nowrap;line-height:1;transform:translate(-50%,-50%);font-family:'Liberation Sans',sans-serif;font-size:12px;color:#1e1e1e;-webkit-text-stroke:0.2px rgba(30,30,30,0.8);">3.18</div>
<div style="position:absolute;left:809.62px;top:198.1px;white-space:nowrap;line-height:1;transform:translate(-50%,-50%);font-family:'Liberation Sans',sans-serif;font-size:12px;color:#1e1e1e;-webkit-text-stroke:0.2px rgba(30,30,30,0.8);">核酸</div>
<div style="position:absolute;left:809.62px;top:214.70000000000002px;white-space:nowrap;line-height:1;transform:translate(-50%,-50%);font-family:'Liberation Sans',sans-serif;font-size:12px;color:#1e1e1e;-webkit-text-stroke:0.2px rgba(30,30,30,0.8);">检测</div>
<div style="position:absolute;left:809.62px;top:231.3px;white-space:nowrap;line-height:1;transform:translate(-50%,-50%);font-family:'Liberation Sans',sans-serif;font-size:12px;color:#1e1e1e;-webkit-text-stroke:0.2px rgba(30,30,30,0.8);">人数</div>
<div style="position:absolute;left:846.06px;top:181.5px;white-space:nowrap;line-height:1;transform:translate(-50%,-50%);font-family:'Liberation Sans',sans-serif;font-size:12px;color:#1e1e1e;-webkit-text-stroke:0.2px rgba(30,30,30,0.8);">3.20</div>
<div style="position:absolute;left:846.06px;top:198.1px;white-space:nowrap;line-height:1;transform:translate(-50%,-50%);font-family:'Liberation Sans',sans-serif;font-size:12px;color:#1e1e1e;-webkit-text-stroke:0.2px rgba(30,30,30,0.8);">核酸</div>
<div style="position:absolute;left:846.06px;top:214.70000000000002px;white-space:nowrap;line-height:1;transform:translate(-50%,-50%);font-family:'Liberation Sans',sans-serif;font-size:12px;color:#1e1e1e;-webkit-text-stroke:0.2px rgba(30,30,30,0.8);">检测</div>
<div style="position:absolute;left:846.06px;top:231.3px;white-space:nowrap;line-height:1;transform:translate(-50%,-50%);font-family:'Liberation Sans',sans-serif;font-size:12px;color:#1e1e1e;-webkit-text-stroke:0.2px rgba(30,30,30,0.8);">人数</div>
<div style="position:absolute;left:882.5px;top:181.5px;white-space:nowrap;line-height:1;transform:translate(-50%,-50%);font-family:'Liberation Sans',sans-serif;font-size:12px;color:#1e1e1e;-webkit-text-stroke:0.2px rgba(30,30,30,0.8);">3.22</div>
<div style="position:absolute;left:882.5px;top:198.1px;white-space:nowrap;line-height:1;transform:translate(-50%,-50%);font-family:'Liberation Sans',sans-serif;font-size:12px;color:#1e1e1e;-webkit-text-stroke:0.2px rgba(30,30,30,0.8);">核酸</div>
<div style="position:absolute;left:882.5px;top:214.70000000000002px;white-space:nowrap;line-height:1;transform:translate(-50%,-50%);font-family:'Liberation Sans',sans-serif;font-size:12px;color:#1e1e1e;-webkit-text-stroke:0.2px rgba(30,30,30,0.8);">检测</div>
<div style="position:absolute;left:882.5px;top:231.3px;white-space:nowrap;line-height:1;transform:translate(-50%,-50%);font-family:'Liberation Sans',sans-serif;font-size:12px;color:#1e1e1e;-webkit-text-stroke:0.2px rgba(30,30,30,0.8);">人数</div>
<div style="position:absolute;left:918.94px;top:181.5px;white-space:nowrap;line-height:1;transform:translate(-50%,-50%);font-family:'Liberation Sans',sans-serif;font-size:12px;color:#1e1e1e;-webkit-text-stroke:0.2px rgba(30,30,30,0.8);">3.24</div>
<div style="position:absolute;left:918.94px;top:198.1px;white-space:nowrap;line-height:1;transform:translate(-50%,-50%);font-family:'Liberation Sans',sans-serif;font-size:12px;color:#1e1e1e;-webkit-text-stroke:0.2px rgba(30,30,30,0.8);">核酸</div>
<div style="position:absolute;left:918.94px;top:214.70000000000002px;white-space:nowrap;line-height:1;transform:translate(-50%,-50%);font-family:'Liberation Sans',sans-serif;font-size:12px;color:#1e1e1e;-webkit-text-stroke:0.2px rgba(30,30,30,0.8);">检测</div>
<div style="position:absolute;left:918.94px;top:231.3px;white-space:nowrap;line-height:1;transform:translate(-50%,-50%);font-family:'Liberation Sans',sans-serif;font-size:12px;color:#1e1e1e;-webkit-text-stroke:0.2px rgba(30,30,30,0.8);">人数</div>
<div style="position:absolute;left:955.38px;top:181.5px;white-space:nowrap;line-height:1;transform:translate(-50%,-50%);font-family:'Liberation Sans',sans-serif;font-size:12px;color:#1e1e1e;-webkit-text-stroke:0.2px rgba(30,30,30,0.8);">3.26</div>
<div style="position:absolute;left:955.38px;top:198.1px;white-space:nowrap;line-height:1;transform:translate(-50%,-50%);font-family:'Liberation Sans',sans-serif;font-size:12px;color:#1e1e1e;-webkit-text-stroke:0.2px rgba(30,30,30,0.8);">核酸</div>
<div style="position:absolute;left:955.38px;top:214.70000000000002px;white-space:nowrap;line-height:1;transform:translate(-50%,-50%);font-family:'Liberation Sans',sans-serif;font-size:12px;color:#1e1e1e;-webkit-text-stroke:0.2px rgba(30,30,30,0.8);">检测</div>
<div style="position:absolute;left:955.38px;top:231.3px;white-space:nowrap;line-height:1;transform:translate(-50%,-50%);font-family:'Liberation Sans',sans-serif;font-size:12px;color:#1e1e1e;-webkit-text-stroke:0.2px rgba(30,30,30,0.8);">人数</div>
<div style="position:absolute;left:991.8199999999999px;top:181.5px;white-space:nowrap;line-height:1;transform:translate(-50%,-50%);font-family:'Liberation Sans',sans-serif;font-size:12px;color:#1e1e1e;-webkit-text-stroke:0.2px rgba(30,30,30,0.8);">3.29</div>
<div style="position:absolute;left:991.8199999999999px;top:198.1px;white-space:nowrap;line-height:1;transform:translate(-50%,-50%);font-family:'Liberation Sans',sans-serif;font-size:12px;color:#1e1e1e;-webkit-text-stroke:0.2px rgba(30,30,30,0.8);">核酸</div>
<div style="position:absolute;left:991.8199999999999px;top:214.70000000000002px;white-space:nowrap;line-height:1;transform:translate(-50%,-50%);font-family:'Liberation Sans',sans-serif;font-size:12px;color:#1e1e1e;-webkit-text-stroke:0.2px rgba(30,30,30,0.8);">检测</div>
<div style="position:absolute;left:991.8199999999999px;top:231.3px;white-space:nowrap;line-height:1;transform:translate(-50%,-50%);font-family:'Liberation Sans',sans-serif;font-size:12px;color:#1e1e1e;-webkit-text-stroke:0.2px rgba(30,30,30,0.8);">人数</div>
<div style="position:absolute;left:1028.26px;top:181.5px;white-space:nowrap;line-height:1;transform:translate(-50%,-50%);font-family:'Liberation Sans',sans-serif;font-size:12px;color:#1e1e1e;-webkit-text-stroke:0.2px rgba(30,30,30,0.8);">3.30</div>
<div style="position:absolute;left:1028.26px;top:198.1px;white-space:nowrap;line-height:1;transform:translate(-50%,-50%);font-family:'Liberation Sans',sans-serif;font-size:12px;color:#1e1e1e;-webkit-text-stroke:0.2px rgba(30,30,30,0.8);">核酸</div>
<div style="position:absolute;left:1028.26px;top:214.70000000000002px;white-space:nowrap;line-height:1;transform:translate(-50%,-50%);font-family:'Liberation Sans',sans-serif;font-size:12px;color:#1e1e1e;-webkit-text-stroke:0.2px rgba(30,30,30,0.8);">检测</div>
<div style="position:absolute;left:1028.26px;top:231.3px;white-space:nowrap;line-height:1;transform:translate(-50%,-50%);font-family:'Liberation Sans',sans-serif;font-size:12px;color:#1e1e1e;-webkit-text-stroke:0.2px rgba(30,30,30,0.8);">人数</div>
<div style="position:absolute;left:190.2px;top:278.7px;white-space:nowrap;line-height:1;transform:translate(-50%,-50%);font-family:'Liberation Sans',sans-serif;font-size:12px;color:#1e1e1e;-webkit-text-stroke:0.2px rgba(30,30,30,0.8);font-size:11.5px;">博士</div>
<div style="position:absolute;left:190.2px;top:293.09999999999997px;white-space:nowrap;line-height:1;transform:translate(-50%,-50%);font-family:'Liberation Sans',sans-serif;font-size:12px;color:#1e1e1e;-webkit-text-stroke:0.2px rgba(30,30,30,0.8);font-size:11.5px;">17级</div>
<div style="position:absolute;left:226.8px;top:276.9px;white-space:nowrap;line-height:1;transform:translate(-50%,-50%);font-family:'Liberation Sans',sans-serif;font-size:12px;color:#1e1e1e;-webkit-text-stroke:0.2px rgba(30,30,30,0.8);font-size:11.5px;">许继</div>
<div style="position:absolute;left:226.8px;top:292.9px;white-space:nowrap;line-height:1;transform:translate(-50%,-50%);font-family:'Liberation Sans',sans-serif;font-size:12px;color:#1e1e1e;-webkit-text-stroke:0.2px rgba(30,30,30,0.8);font-size:11.5px;">谦</div>
<div style="position:absolute;left:263.02px;top:284.9px;white-space:nowrap;line-height:1;transform:translate(-50%,-50%);font-family:'Liberation Sans',sans-serif;font-size:12px;color:#1e1e1e;-webkit-text-stroke:0.2px rgba(30,30,30,0.8);font-size:12px;">2/2</div>
<div style="position:absolute;left:299.46000000000004px;top:284.9px;white-space:nowrap;line-height:1;transform:translate(-50%,-50%);font-family:'Liberation Sans',sans-serif;font-size:12px;color:#1e1e1e;-webkit-text-stroke:0.2px rgba(30,30,30,0.8);font-size:12px;">0/0</div>
<div style="position:absolute;left:335.9px;top:284.9px;white-space:nowrap;line-height:1;transform:translate(-50%,-50%);font-family:'Liberation Sans',sans-serif;font-size:12px;color:#1e1e1e;-webkit-text-stroke:0.2px rgba(30,30,30,0.8);font-size:12px;">1/1</div>
<div style="position:absolute;left:663.86px;top:286.09999999999997px;white-space:nowrap;line-height:1;transform:translate(-50%,-50%);font-family:'Liberation Sans',sans-serif;font-size:12px;color:#1e1e1e;-webkit-text-stroke:0.2px rgba(30,30,30,0.8);font-family:'Liberation Serif',serif;font-size:12px;color:#333;-webkit-text-stroke:0;">3</div>
<div style="position:absolute;left:700.3px;top:286.09999999999997px;white-space:nowrap;line-height:1;transform:translate(-50%,-50%);font-family:'Liberation Sans',sans-serif;font-size:12px;color:#1e1e1e;-webkit-text-stroke:0.2px rgba(30,30,30,0.8);font-family:'Liberation Serif',serif;font-size:12px;color:#333;-webkit-text-stroke:0;">4</div>
<div style="position:absolute;left:736.74px;top:286.09999999999997px;white-space:nowrap;line-height:1;transform:translate(-50%,-50%);font-family:'Liberation Sans',sans-serif;font-size:12px;color:#1e1e1e;-webkit-text-stroke:0.2px rgba(30,30,30,0.8);font-family:'Liberation Serif',serif;font-size:12px;color:#333;-webkit-text-stroke:0;">7</div>
<div style="position:absolute;left:773.1800000000001px;top:286.09999999999997px;white-space:nowrap;line-height:1;transform:translate(-50%,-50%);font-family:'Liberation Sans',sans-serif;font-size:12px;color:#1e1e1e;-webkit-text-stroke:0.2px rgba(30,30,30,0.8);font-family:'Liberation Serif',serif;font-size:12px;color:#333;-webkit-text-stroke:0;">3</div>
<div style="position:absolute;left:809.62px;top:286.09999999999997px;white-space:nowrap;line-height:1;transform:translate(-50%,-50%);font-family:'Liberation Sans',sans-serif;font-size:12px;color:#1e1e1e;-webkit-text-stroke:0.2px rgba(30,30,30,0.8);font-family:'Liberation Serif',serif;font-size:12px;color:#333;-webkit-text-stroke:0;">3</div>
<div style="position:absolute;left:846.06px;top:286.09999999999997px;white-space:nowrap;line-height:1;transform:translate(-50%,-50%);font-family:'Liberation Sans',sans-serif;font-size:12px;color:#1e1e1e;-webkit-text-stroke:0.2px rgba(30,30,30,0.8);font-family:'Liberation Serif',serif;font-size:12px;color:#333;-webkit-text-stroke:0;">3</div>
<div style="position:absolute;left:882.5px;top:286.09999999999997px;white-space:nowrap;line-height:1;transform:translate(-50%,-50%);font-family:'Liberation Sans',sans-serif;font-size:12px;color:#1e1e1e;-webkit-text-stroke:0.2px rgba(30,30,30,0.8);font-family:'Liberation Serif',serif;font-size:12px;color:#333;-webkit-text-stroke:0;">3</div>
<div style="position:absolute;left:918.94px;top:286.09999999999997px;white-space:nowrap;line-height:1;transform:translate(-50%,-50%);font-family:'Liberation Sans',sans-serif;font-size:12px;color:#1e1e1e;-webkit-text-stroke:0.2px rgba(30,30,30,0.8);font-family:'Liberation Serif',serif;font-size:12px;color:#333;-webkit-text-stroke:0;">2</div>
<div style="position:absolute;left:955.38px;top:286.09999999999997px;white-space:nowrap;line-height:1;transform:translate(-50%,-50%);font-family:'Liberation Sans',sans-serif;font-size:12px;color:#1e1e1e;-webkit-text-stroke:0.2px rgba(30,30,30,0.8);font-family:'Liberation Serif',serif;font-size:12px;color:#333;-webkit-text-stroke:0;">3</div>
<div style="position:absolute;left:991.8199999999999px;top:286.09999999999997px;white-space:nowrap;line-height:1;transform:translate(-50%,-50%);font-family:'Liberation Sans',sans-serif;font-size:12px;color:#1e1e1e;-webkit-text-stroke:0.2px rgba(30,30,30,0.8);font-family:'Liberation Serif',serif;font-size:12px;color:#333;-webkit-text-stroke:0;">3</div>
<div style="position:absolute;left:1028.26px;top:286.09999999999997px;white-space:nowrap;line-height:1;transform:translate(-50%,-50%);font-family:'Liberation Sans',sans-serif;font-size:12px;color:#1e1e1e;-webkit-text-stroke:0.2px rgba(30,30,30,0.8);font-family:'Liberation Serif',serif;font-size:12px;color:#333;-webkit-text-stroke:0;">3</div>
<div style="position:absolute;left:190.2px;top:329.7px;white-space:nowrap;line-height:1;transform:translate(-50%,-50%);font-family:'Liberation Sans',sans-serif;font-size:12px;color:#1e1e1e;-webkit-text-stroke:0.2px rgba(30,30,30,0.8);font-size:11.5px;">博士</div>
<div style="position:absolute;left:190.2px;top:344.09999999999997px;white-space:nowrap;line-height:1;transform:translate(-50%,-50%);font-family:'Liberation Sans',sans-serif;font-size:12px;color:#1e1e1e;-webkit-text-stroke:0.2px rgba(30,30,30,0.8);font-size:11.5px;">18级</div>
<div style="position:absolute;left:226.8px;top:327.9px;white-space:nowrap;line-height:1;transform:translate(-50%,-50%);font-family:'Liberation Sans',sans-serif;font-size:12px;color:#1e1e1e;-webkit-text-stroke:0.2px rgba(30,30,30,0.8);font-size:11.5px;">许继</div>
<div style="position:absolute;left:226.8px;top:343.9px;white-space:nowrap;line-height:1;transform:translate(-50%,-50%);font-family:'Liberation Sans',sans-serif;font-size:12px;color:#1e1e1e;-webkit-text-stroke:0.2px rgba(30,30,30,0.8);font-size:11.5px;">谦</div>
<div style="position:absolute;left:263.02px;top:335.9px;white-space:nowrap;line-height:1;transform:translate(-50%,-50%);font-family:'Liberation Sans',sans-serif;font-size:12px;color:#1e1e1e;-webkit-text-stroke:0.2px rgba(30,30,30,0.8);font-size:12px;">1/1</div>
<div style="position:absolute;left:299.46000000000004px;top:335.9px;white-space:nowrap;line-height:1;transform:translate(-50%,-50%);font-family:'Liberation Sans',sans-serif;font-size:12px;color:#1e1e1e;-webkit-text-stroke:0.2px rgba(30,30,30,0.8);font-size:12px;">0/0</div>
<div style="position:absolute;left:335.9px;top:335.9px;white-space:nowrap;line-height:1;transform:translate(-50%,-50%);font-family:'Liberation Sans',sans-serif;font-size:12px;color:#1e1e1e;-webkit-text-stroke:0.2px rgba(30,30,30,0.8);font-size:12px;">1/1</div>
<div style="position:absolute;left:663.86px;top:337.09999999999997px;white-space:nowrap;line-height:1;transform:translate(-50%,-50%);font-family:'Liberation Sans',sans-serif;font-size:12px;color:#1e1e1e;-webkit-text-stroke:0.2px rgba(30,30,30,0.8);font-family:'Liberation Serif',serif;font-size:12px;color:#333;-webkit-text-stroke:0;">3</div>
<div style="position:absolute;left:700.3px;top:337.09999999999997px;white-space:nowrap;line-height:1;transform:translate(-50%,-50%);font-family:'Liberation Sans',sans-serif;font-size:12px;color:#1e1e1e;-webkit-text-stroke:0.2px rgba(30,30,30,0.8);font-family:'Liberation Serif',serif;font-size:12px;color:#333;-webkit-text-stroke:0;">2</div>
<div style="position:absolute;left:736.74px;top:337.09999999999997px;white-space:nowrap;line-height:1;transform:translate(-50%,-50%);font-family:'Liberation Sans',sans-serif;font-size:12px;color:#1e1e1e;-webkit-text-stroke:0.2px rgba(30,30,30,0.8);font-family:'Liberation Serif',serif;font-size:12px;color:#333;-webkit-text-stroke:0;">5</div>
<div style="position:absolute;left:773.1800000000001px;top:337.09999999999997px;white-space:nowrap;line-height:1;transform:translate(-50%,-50%);font-family:'Liberation Sans',sans-serif;font-size:12px;color:#1e1e1e;-webkit-text-stroke:0.2px rgba(30,30,30,0.8);font-family:'Liberation Serif',serif;font-size:12px;color:#333;-webkit-text-stroke:0;">2</div>
<div style="position:absolute;left:809.62px;top:337.09999999999997px;white-space:nowrap;line-height:1;transform:translate(-50%,-50%);font-family:'Liberation Sans',sans-serif;font-size:12px;color:#1e1e1e;-webkit-text-stroke:0.2px rgba(30,30,30,0.8);font-family:'Liberation Serif',serif;font-size:12px;color:#333;-webkit-text-stroke:0;">3</div>
<div style="position:absolute;left:846.06px;top:337.09999999999997px;white-space:nowrap;line-height:1;transform:translate(-50%,-50%);font-family:'Liberation Sans',sans-serif;font-size:12px;color:#1e1e1e;-webkit-text-stroke:0.2px rgba(30,30,30,0.8);font-family:'Liberation Serif',serif;font-size:12px;color:#333;-webkit-text-stroke:0;">3</div>
<div style="position:absolute;left:882.5px;top:337.09999999999997px;white-space:nowrap;line-height:1;transform:translate(-50%,-50%);font-family:'Liberation Sans',sans-serif;font-size:12px;color:#1e1e1e;-webkit-text-stroke:0.2px rgba(30,30,30,0.8);font-family:'Liberation Serif',serif;font-size:12px;color:#333;-webkit-text-stroke:0;">3</div>
<div style="position:absolute;left:918.94px;top:337.09999999999997px;white-space:nowrap;line-height:1;transform:translate(-50%,-50%);font-family:'Liberation Sans',sans-serif;font-size:12px;color:#1e1e1e;-webkit-text-stroke:0.2px rgba(30,30,30,0.8);font-family:'Liberation Serif',serif;font-size:12px;color:#333;-webkit-text-stroke:0;">3</div>
<div style="position:absolute;left:955.38px;top:337.09999999999997px;white-space:nowrap;line-height:1;transform:translate(-50%,-50%);font-family:'Liberation Sans',sans-serif;font-size:12px;color:#1e1e1e;-webkit-text-stroke:0.2px rgba(30,30,30,0.8);font-family:'Liberation Serif',serif;font-size:12px;color:#333;-webkit-text-stroke:0;">3</div>
<div style="position:absolute;left:991.8199999999999px;top:337.09999999999997px;white-space:nowrap;line-height:1;transform:translate(-50%,-50%);font-family:'Liberation Sans',sans-serif;font-size:12px;color:#1e1e1e;-webkit-text-stroke:0.2px rgba(30,30,30,0.8);font-family:'Liberation Serif',serif;font-size:12px;color:#333;-webkit-text-stroke:0;">2</div>
<div style="position:absolute;left:1028.26px;top:337.09999999999997px;white-space:nowrap;line-height:1;transform:translate(-50%,-50%);font-family:'Liberation Sans',sans-serif;font-size:12px;color:#1e1e1e;-webkit-text-stroke:0.2px rgba(30,30,30,0.8);font-family:'Liberation Serif',serif;font-size:12px;color:#333;-webkit-text-stroke:0;">2</div>
<div style="position:absolute;left:190.2px;top:380.7px;white-space:nowrap;line-height:1;transform:translate(-50%,-50%);font-family:'Liberation Sans',sans-serif;font-size:12px;color:#1e1e1e;-webkit-text-stroke:0.2px rgba(30,30,30,0.8);font-size:11.5px;">博士</div>
<div style="position:absolute;left:190.2px;top:395.09999999999997px;white-space:nowrap;line-height:1;transform:translate(-50%,-50%);font-family:'Liberation Sans',sans-serif;font-size:12px;color:#1e1e1e;-webkit-text-stroke:0.2px rgba(30,30,30,0.8);font-size:11.5px;">19级</div>
<div style="position:absolute;left:226.8px;top:381.0px;white-space:nowrap;line-height:1;transform:translate(-50%,-50%);font-family:'Liberation Sans',sans-serif;font-size:12px;color:#1e1e1e;-webkit-text-stroke:0.2px rgba(30,30,30,0.8);font-size:11.5px;">冷川</div>
<div style="position:absolute;left:226.8px;top:394.79999999999995px;white-space:nowrap;line-height:1;transform:translate(-50%,-50%);font-family:'Liberation Sans',sans-serif;font-size:12px;color:#1e1e1e;-webkit-text-stroke:0.2px rgba(30,30,30,0.8);font-size:11.5px;">江</div>
<div style="position:absolute;left:263.02px;top:386.9px;white-space:nowrap;line-height:1;transform:translate(-50%,-50%);font-family:'Liberation Sans',sans-serif;font-size:12px;color:#1e1e1e;-webkit-text-stroke:0.2px rgba(30,30,30,0.8);font-size:12px;">3/3</div>
<div style="position:absolute;left:299.46000000000004px;top:386.9px;white-space:nowrap;line-height:1;transform:translate(-50%,-50%);font-family:'Liberation Sans',sans-serif;font-size:12px;color:#1e1e1e;-webkit-text-stroke:0.2px rgba(30,30,30,0.8);font-size:12px;">0/0</div>
<div style="position:absolute;left:335.9px;top:386.9px;white-space:nowrap;line-height:1;transform:translate(-50%,-50%);font-family:'Liberation Sans',sans-serif;font-size:12px;color:#1e1e1e;-webkit-text-stroke:0.2px rgba(30,30,30,0.8);font-size:12px;">0/0</div>
<div style="position:absolute;left:372.34000000000003px;top:386.9px;white-space:nowrap;line-height:1;transform:translate(-50%,-50%);font-family:'Liberation Sans',sans-serif;font-size:12px;color:#1e1e1e;-webkit-text-stroke:0.2px rgba(30,30,30,0.8);font-size:12px;">0/0</div>
<div style="position:absolute;left:408.78px;top:386.9px;white-space:nowrap;line-height:1;transform:translate(-50%,-50%);font-family:'Liberation Sans',sans-serif;font-size:12px;color:#1e1e1e;-webkit-text-stroke:0.2px rgba(30,30,30,0.8);font-size:12px;">1/1</div>
<div style="position:absolute;left:445.22px;top:386.9px;white-space:nowrap;line-height:1;transform:translate(-50%,-50%);font-family:'Liberation Sans',sans-serif;font-size:12px;color:#1e1e1e;-webkit-text-stroke:0.2px rgba(30,30,30,0.8);font-size:12px;">0/0</div>
<div style="position:absolute;left:481.65999999999997px;top:386.9px;white-space:nowrap;line-height:1;transform:translate(-50%,-50%);font-family:'Liberation Sans',sans-serif;font-size:12px;color:#1e1e1e;-webkit-text-stroke:0.2px rgba(30,30,30,0.8);font-size:12px;">0/0</div>
<div style="position:absolute;left:590.98px;top:386.9px;white-space:nowrap;line-height:1;transform:translate(-50%,-50%);font-family:'Liberation Sans',sans-serif;font-size:12px;color:#1e1e1e;-webkit-text-stroke:0.2px rgba(30,30,30,0.8);font-size:12px;">0/0</div>
<div style="position:absolute;left:663.86px;top:388.09999999999997px;white-space:nowrap;line-height:1;transform:translate(-50%,-50%);font-family:'Liberation Sans',sans-serif;font-size:12px;color:#1e1e1e;-webkit-text-stroke:0.2px rgba(30,30,30,0.8);font-family:'Liberation Serif',serif;font-size:12px;color:#333;-webkit-text-stroke:0;">4</div>
<div style="position:absolute;left:700.3px;top:388.09999999999997px;white-space:nowrap;line-height:1;transform:translate(-50%,-50%);font-family:'Liberation Sans',sans-serif;font-size:12px;color:#1e1e1e;-webkit-text-stroke:0.2px rgba(30,30,30,0.8);font-family:'Liberation Serif',serif;font-size:12px;color:#333;-webkit-text-stroke:0;">3</div>
<div style="position:absolute;left:736.74px;top:388.09999999999997px;white-space:nowrap;line-height:1;transform:translate(-50%,-50%);font-family:'Liberation Sans',sans-serif;font-size:12px;color:#1e1e1e;-webkit-text-stroke:0.2px rgba(30,30,30,0.8);font-family:'Liberation Serif',serif;font-size:12px;color:#333;-webkit-text-stroke:0;">7</div>
<div style="position:absolute;left:773.1800000000001px;top:388.09999999999997px;white-space:nowrap;line-height:1;transform:translate(-50%,-50%);font-family:'Liberation Sans',sans-serif;font-size:12px;color:#1e1e1e;-webkit-text-stroke:0.2px rgba(30,30,30,0.8);font-family:'Liberation Serif',serif;font-size:12px;color:#333;-webkit-text-stroke:0;">4</div>
<div style="position:absolute;left:809.62px;top:388.09999999999997px;white-space:nowrap;line-height:1;transform:translate(-50%,-50%);font-family:'Liberation Sans',sans-serif;font-size:12px;color:#1e1e1e;-webkit-text-stroke:0.2px rgba(30,30,30,0.8);font-family:'Liberation Serif',serif;font-size:12px;color:#333;-webkit-text-stroke:0;">4</div>
<div style="position:absolute;left:846.06px;top:388.09999999999997px;white-space:nowrap;line-height:1;transform:translate(-50%,-50%);font-family:'Liberation Sans',sans-serif;font-size:12px;color:#1e1e1e;-webkit-text-stroke:0.2px rgba(30,30,30,0.8);font-family:'Liberation Serif',serif;font-size:12px;color:#333;-webkit-text-stroke:0;">4</div>
<div style="position:absolute;left:882.5px;top:388.09999999999997px;white-space:nowrap;line-height:1;transform:translate(-50%,-50%);font-family:'Liberation Sans',sans-serif;font-size:12px;color:#1e1e1e;-webkit-text-stroke:0.2px rgba(30,30,30,0.8);font-family:'Liberation Serif',serif;font-size:12px;color:#333;-webkit-text-stroke:0;">4</div>
<div style="position:absolute;left:918.94px;top:388.09999999999997px;white-space:nowrap;line-height:1;transform:translate(-50%,-50%);font-family:'Liberation Sans',sans-serif;font-size:12px;color:#1e1e1e;-webkit-text-stroke:0.2px rgba(30,30,30,0.8);font-family:'Liberation Serif',serif;font-size:12px;color:#333;-webkit-text-stroke:0;">4</div>
<div style="position:absolute;left:955.38px;top:388.09999999999997px;white-space:nowrap;line-height:1;transform:translate(-50%,-50%);font-family:'Liberation Sans',sans-serif;font-size:12px;color:#1e1e1e;-webkit-text-stroke:0.2px rgba(30,30,30,0.8);font-family:'Liberation Serif',serif;font-size:12px;color:#333;-webkit-text-stroke:0;">4</div>
<div style="position:absolute;left:991.8199999999999px;top:388.09999999999997px;white-space:nowrap;line-height:1;transform:translate(-50%,-50%);font-family:'Liberation Sans',sans-serif;font-size:12px;color:#1e1e1e;-webkit-text-stroke:0.2px rgba(30,30,30,0.8);font-family:'Liberation Serif',serif;font-size:12px;color:#333;-webkit-text-stroke:0;">4</div>
<div style="position:absolute;left:1028.26px;top:388.09999999999997px;white-space:nowrap;line-height:1;transform:translate(-50%,-50%);font-family:'Liberation Sans',sans-serif;font-size:12px;color:#1e1e1e;-webkit-text-stroke:0.2px rgba(30,30,30,0.8);font-family:'Liberation Serif',serif;font-size:12px;color:#333;-webkit-text-stroke:0;">4</div>
<div style="position:absolute;left:190.2px;top:431.7px;white-space:nowrap;line-height:1;transform:translate(-50%,-50%);font-family:'Liberation Sans',sans-serif;font-size:12px;color:#1e1e1e;-webkit-text-stroke:0.2px rgba(30,30,30,0.8);font-size:11.5px;">博士</div>
<div style="position:absolute;left:190.2px;top:446.09999999999997px;white-space:nowrap;line-height:1;transform:translate(-50%,-50%);font-family:'Liberation Sans',sans-serif;font-size:12px;color:#1e1e1e;-webkit-text-stroke:0.2px rgba(30,30,30,0.8);font-size:11.5px;">20级</div>
<div style="position:absolute;left:226.8px;top:438.9px;white-space:nowrap;line-height:1;transform:translate(-50%,-50%);font-family:'Liberation Sans',sans-serif;font-size:12px;color:#1e1e1e;-webkit-text-stroke:0.2px rgba(30,30,30,0.8);font-size:11.5px;">王欢</div>
<div style="position:absolute;left:263.02px;top:437.9px;white-space:nowrap;line-height:1;transform:translate(-50%,-50%);font-family:'Liberation Sans',sans-serif;font-size:12px;color:#1e1e1e;-webkit-text-stroke:0.2px rgba(30,30,30,0.8);font-size:12px;">1/1</div>
<div style="position:absolute;left:335.9px;top:437.9px;white-space:nowrap;line-height:1;transform:translate(-50%,-50%);font-family:'Liberation Sans',sans-serif;font-size:12px;color:#1e1e1e;-webkit-text-stroke:0.2px rgba(30,30,30,0.8);font-size:12px;">4/4</div>
<div style="position:absolute;left:663.86px;top:439.09999999999997px;white-space:nowrap;line-height:1;transform:translate(-50%,-50%);font-family:'Liberation Sans',sans-serif;font-size:12px;color:#1e1e1e;-webkit-text-stroke:0.2px rgba(30,30,30,0.8);font-family:'Liberation Serif',serif;font-size:12px;color:#333;-webkit-text-stroke:0;">5</div>
<div style="position:absolute;left:700.3px;top:439.09999999999997px;white-space:nowrap;line-height:1;transform:translate(-50%,-50%);font-family:'Liberation Sans',sans-serif;font-size:12px;color:#1e1e1e;-webkit-text-stroke:0.2px rgba(30,30,30,0.8);font-family:'Liberation Serif',serif;font-size:12px;color:#333;-webkit-text-stroke:0;">0</div>
<div style="position:absolute;left:736.74px;top:439.09999999999997px;white-space:nowrap;line-height:1;transform:translate(-50%,-50%);font-family:'Liberation Sans',sans-serif;font-size:12px;color:#1e1e1e;-webkit-text-stroke:0.2px rgba(30,30,30,0.8);font-family:'Liberation Serif',serif;font-size:12px;color:#333;-webkit-text-stroke:0;">5</div>
<div style="position:absolute;left:773.1800000000001px;top:439.09999999999997px;white-space:nowrap;line-height:1;transform:translate(-50%,-50%);font-family:'Liberation Sans',sans-serif;font-size:12px;color:#1e1e1e;-webkit-text-stroke:0.2px rgba(30,30,30,0.8);font-family:'Liberation Serif',serif;font-size:12px;color:#333;-webkit-text-stroke:0;">4</div>
<div style="position:absolute;left:809.62px;top:439.09999999999997px;white-space:nowrap;line-height:1;transform:translate(-50%,-50%);font-family:'Liberation Sans',sans-serif;font-size:12px;color:#1e1e1e;-webkit-text-stroke:0.2px rgba(30,30,30,0.8);font-family:'Liberation Serif',serif;font-size:12px;color:#333;-webkit-text-stroke:0;">4</div>
<div style="position:absolute;left:846.06px;top:439.09999999999997px;white-space:nowrap;line-height:1;transform:translate(-50%,-50%);font-family:'Liberation Sans',sans-serif;font-size:12px;color:#1e1e1e;-webkit-text-stroke:0.2px rgba(30,30,30,0.8);font-family:'Liberation Serif',serif;font-size:12px;color:#333;-webkit-text-stroke:0;">4</div>
<div style="position:absolute;left:882.5px;top:439.09999999999997px;white-space:nowrap;line-height:1;transform:translate(-50%,-50%);font-family:'Liberation Sans',sans-serif;font-size:12px;color:#1e1e1e;-webkit-text-stroke:0.2px rgba(30,30,30,0.8);font-family:'Liberation Serif',serif;font-size:12px;color:#333;-webkit-text-stroke:0;">4</div>
<div style="position:absolute;left:918.94px;top:439.09999999999997px;white-space:nowrap;line-height:1;transform:translate(-50%,-50%);font-family:'Liberation Sans',sans-serif;font-size:12px;color:#1e1e1e;-webkit-text-stroke:0.2px rgba(30,30,30,0.8);font-family:'Liberation Serif',serif;font-size:12px;color:#333;-webkit-text-stroke:0;">4</div>
<div style="position:absolute;left:955.38px;top:439.09999999999997px;white-space:nowrap;line-height:1;transform:translate(-50%,-50%);font-family:'Liberation Sans',sans-serif;font-size:12px;color:#1e1e1e;-webkit-text-stroke:0.2px rgba(30,30,30,0.8);font-family:'Liberation Serif',serif;font-size:12px;color:#333;-webkit-text-stroke:0;">4</div>
<div style="position:absolute;left:991.8199999999999px;top:439.09999999999997px;white-space:nowrap;line-height:1;transform:translate(-50%,-50%);font-family:'Liberation Sans',sans-serif;font-size:12px;color:#1e1e1e;-webkit-text-stroke:0.2px rgba(30,30,30,0.8);font-family:'Liberation Serif',serif;font-size:12px;color:#333;-webkit-text-stroke:0;">4</div>
<div style="position:absolute;left:1028.26px;top:439.09999999999997px;white-space:nowrap;line-height:1;transform:translate(-50%,-50%);font-family:'Liberation Sans',sans-serif;font-size:12px;color:#1e1e1e;-webkit-text-stroke:0.2px rgba(30,30,30,0.8);font-family:'Liberation Serif',serif;font-size:12px;color:#333;-webkit-text-stroke:0;">4</div>
<div style="position:absolute;left:190.2px;top:482.7px;white-space:nowrap;line-height:1;transform:translate(-50%,-50%);font-family:'Liberation Sans',sans-serif;font-size:12px;color:#1e1e1e;-webkit-text-stroke:0.2px rgba(30,30,30,0.8);font-size:11.5px;">博士</div>
<div style="position:absolute;left:190.2px;top:497.09999999999997px;white-space:nowrap;line-height:1;transform:translate(-50%,-50%);font-family:'Liberation Sans',sans-serif;font-size:12px;color:#1e1e1e;-webkit-text-stroke:0.2px rgba(30,30,30,0.8);font-size:11.5px;">21级</div>
<div style="position:absolute;left:226.8px;top:483.0px;white-space:nowrap;line-height:1;transform:translate(-50%,-50%);font-family:'Liberation Sans',sans-serif;font-size:12px;color:#1e1e1e;-webkit-text-stroke:0.2px rgba(30,30,30,0.8);font-size:11.5px;">白忠</div>
<div style="position:absolute;left:226.8px;top:496.79999999999995px;white-space:nowrap;line-height:1;transform:translate(-50%,-50%);font-family:'Liberation Sans',sans-serif;font-size:12px;color:#1e1e1e;-webkit-text-stroke:0.2px rgba(30,30,30,0.8);font-size:11.5px;">玉</div>
<div style="position:absolute;left:263.02px;top:488.9px;white-space:nowrap;line-height:1;transform:translate(-50%,-50%);font-family:'Liberation Sans',sans-serif;font-size:12px;color:#1e1e1e;-webkit-text-stroke:0.2px rgba(30,30,30,0.8);font-size:12px;">1/1</div>
<div style="position:absolute;left:335.9px;top:488.9px;white-space:nowrap;line-height:1;transform:translate(-50%,-50%);font-family:'Liberation Sans',sans-serif;font-size:12px;color:#1e1e1e;-webkit-text-stroke:0.2px rgba(30,30,30,0.8);font-size:12px;">2/2</div>
<div style="position:absolute;left:445.22px;top:488.9px;white-space:nowrap;line-height:1;transform:translate(-50%,-50%);font-family:'Liberation Sans',sans-serif;font-size:12px;color:#1e1e1e;-webkit-text-stroke:0.2px rgba(30,30,30,0.8);font-size:12px;">2/2</div>
<div style="position:absolute;left:663.86px;top:490.09999999999997px;white-space:nowrap;line-height:1;transform:translate(-50%,-50%);font-family:'Liberation Sans',sans-serif;font-size:12px;color:#1e1e1e;-webkit-text-stroke:0.2px rgba(30,30,30,0.8);font-family:'Liberation Serif',serif;font-size:12px;color:#333;-webkit-text-stroke:0;">5</div>
<div style="position:absolute;left:700.3px;top:490.09999999999997px;white-space:nowrap;line-height:1;transform:translate(-50%,-50%);font-family:'Liberation Sans',sans-serif;font-size:12px;color:#1e1e1e;-webkit-text-stroke:0.2px rgba(30,30,30,0.8);font-family:'Liberation Serif',serif;font-size:12px;color:#333;-webkit-text-stroke:0;">0</div>
<div style="position:absolute;left:736.74px;top:490.09999999999997px;white-space:nowrap;line-height:1;transform:translate(-50%,-50%);font-family:'Liberation Sans',sans-serif;font-size:12px;color:#1e1e1e;-webkit-text-stroke:0.2px rgba(30,30,30,0.8);font-family:'Liberation Serif',serif;font-size:12px;color:#333;-webkit-text-stroke:0;">5</div>
<div style="position:absolute;left:773.1800000000001px;top:490.09999999999997px;white-space:nowrap;line-height:1;transform:translate(-50%,-50%);font-family:'Liberation Sans',sans-serif;font-size:12px;color:#1e1e1e;-webkit-text-stroke:0.2px rgba(30,30,30,0.8);font-family:'Liberation Serif',serif;font-size:12px;color:#333;-webkit-text-stroke:0;">3</div>
<div style="position:absolute;left:809.62px;top:490.09999999999997px;white-space:nowrap;line-height:1;transform:translate(-50%,-50%);font-family:'Liberation Sans',sans-serif;font-size:12px;color:#1e1e1e;-webkit-text-stroke:0.2px rgba(30,30,30,0.8);font-family:'Liberation Serif',serif;font-size:12px;color:#333;-webkit-text-stroke:0;">3</div>
<div style="position:absolute;left:846.06px;top:490.09999999999997px;white-space:nowrap;line-height:1;transform:translate(-50%,-50%);font-family:'Liberation Sans',sans-serif;font-size:12px;color:#1e1e1e;-webkit-text-stroke:0.2px rgba(30,30,30,0.8);font-family:'Liberation Serif',serif;font-size:12px;color:#333;-webkit-text-stroke:0;">3</div>
<div style="position:absolute;left:882.5px;top:490.09999999999997px;white-space:nowrap;line-height:1;transform:translate(-50%,-50%);font-family:'Liberation Sans',sans-serif;font-size:12px;color:#1e1e1e;-webkit-text-stroke:0.2px rgba(30,30,30,0.8);font-family:'Liberation Serif',serif;font-size:12px;color:#333;-webkit-text-stroke:0;">3</div>
<div style="position:absolute;left:918.94px;top:490.09999999999997px;white-space:nowrap;line-height:1;transform:translate(-50%,-50%);font-family:'Liberation Sans',sans-serif;font-size:12px;color:#1e1e1e;-webkit-text-stroke:0.2px rgba(30,30,30,0.8);font-family:'Liberation Serif',serif;font-size:12px;color:#333;-webkit-text-stroke:0;">3</div>
<div style="position:absolute;left:955.38px;top:490.09999999999997px;white-space:nowrap;line-height:1;transform:translate(-50%,-50%);font-family:'Liberation Sans',sans-serif;font-size:12px;color:#1e1e1e;-webkit-text-stroke:0.2px rgba(30,30,30,0.8);font-family:'Liberation Serif',serif;font-size:12px;color:#333;-webkit-text-stroke:0;">3</div>
<div style="position:absolute;left:991.8199999999999px;top:490.09999999999997px;white-space:nowrap;line-height:1;transform:translate(-50%,-50%);font-family:'Liberation Sans',sans-serif;font-size:12px;color:#1e1e1e;-webkit-text-stroke:0.2px rgba(30,30,30,0.8);font-family:'Liberation Serif',serif;font-size:12px;color:#333;-webkit-text-stroke:0;">3</div>
<div style="position:absolute;left:1028.26px;top:490.09999999999997px;white-space:nowrap;line-height:1;transform:translate(-50%,-50%);font-family:'Liberation Sans',sans-serif;font-size:12px;color:#1e1e1e;-webkit-text-stroke:0.2px rgba(30,30,30,0.8);font-family:'Liberation Serif',serif;font-size:12px;color:#333;-webkit-text-stroke:0;">3</div>
<div style="position:absolute;left:487.3px;top:10.5px;white-space:nowrap;line-height:1;transform:translateY(-50%);font-family:'Liberation Sans',sans-serif;font-size:9.6px;"><span style="color:#5a5a5a;font-size:9.4px">机器人学院研究生返校情况统计表</span><span style="color:#5a5a5a;font-size:9.4px">(截止3月29日).xlsx</span><span style="color:#5a5a5a;font-size:9.6px;padding:0 4px">-</span><span style="color:#3e5f93;font-size:9.9px">Microsoft Excel</span></div>
<div style="position:absolute;left:1049.5px;top:10px;width:6px;height:1.8px;background:#6a7b94;"></div>
<svg style="position:absolute;left:1074.5px;top:5.5px" width="9" height="7"><rect x="2.5" y="0.5" width="6" height="4" fill="none" stroke="#6a7b94" stroke-width="1"/><rect x="0.5" y="2.5" width="6" height="4" fill="#e4ebf5" stroke="#6a7b94" stroke-width="1"/><path d="M0.5,3 L6.5,3" stroke="#6a7b94" stroke-width="1.4"/></svg>
<svg style="position:absolute;left:1101px;top:5px" width="8" height="7"><path d="M1,0.8 L7,6.2 M7,0.8 L1,6.2" stroke="#6a7b94" stroke-width="1.4"/></svg>
<div style="position:absolute;left:170px;top:2px;width:85px;height:17px;border-radius:0 9px 9px 0;background:linear-gradient(#f0f4fa,#dfe8f4);border:1px solid #c8d4e6;border-left:none;box-sizing:border-box;"></div>
<svg style="position:absolute;left:186px;top:4.5px" width="12" height="11"><path d="M0.5,0.5 L11,0.5 L11.5,1 L11.5,10.5 L0.5,10.5 Z" fill="#4a4fb8"/><rect x="2.5" y="1" width="7" height="4.5" fill="#eef0fa"/><rect x="3.5" y="7" width="5" height="3.5" fill="#2a2f80"/><rect x="6" y="7.5" width="1.5" height="2.5" fill="#c8cce8"/></svg>
<svg style="position:absolute;left:202.5px;top:5px" width="11" height="10"><path d="M2,1 L2,5 L6,5" stroke="#a3b3c9" stroke-width="1.6" fill="none"/><path d="M2.5,4.5 C5,1 10,2 9.5,6 C9,8 7,9 5.5,9" stroke="#a3b3c9" stroke-width="1.6" fill="none"/></svg>
<svg style="position:absolute;left:226.5px;top:5px" width="11" height="10"><path d="M9,1 L9,5 L5,5" stroke="#a3b3c9" stroke-width="1.6" fill="none"/><path d="M8.5,4.5 C6,1 1,2 1.5,6 C2,8 4,9 5.5,9" stroke="#a3b3c9" stroke-width="1.6" fill="none"/></svg>
<svg style="position:absolute;left:216.5px;top:8.5px" width="4" height="3"><polygon points="0,0 4,0 2,2.5" fill="#b3c0d2"/></svg>
<svg style="position:absolute;left:240px;top:8.5px" width="4" height="3"><polygon points="0,0 4,0 2,2.5" fill="#b3c0d2"/></svg>
<svg style="position:absolute;left:259px;top:6.5px" width="6" height="6"><rect x="0" y="0" width="6" height="1.2" fill="#1f3264"/><polygon points="0,2.3 6,2.3 3,5.5" fill="#1f3264"/></svg>
<div style="position:absolute;left:149px;top:3px;width:28px;height:28px;border-radius:50%;background:radial-gradient(circle at 50% 40%,#ffffff 0,#f4f6f9 45%,#dfe5ee 75%,#c4cfdd 100%);box-shadow:0 0 0 0.8px #a9b6c8;"></div>
<svg style="position:absolute;left:153.5px;top:8.5px" width="18" height="11"><rect x="1" y="1" width="8.5" height="9" rx="1" fill="#e36a2a"/><rect x="3" y="3" width="4.5" height="5" fill="#f7d2a8"/><rect x="10" y="3" width="3.5" height="3.5" fill="#4a8fe0"/><rect x="13.8" y="3" width="3.2" height="3.5" fill="#62a6ee"/><rect x="10" y="7" width="3.5" height="3.5" fill="#3f7fd0"/><rect x="13.8" y="7" width="3.2" height="3.5" fill="#5596e0"/></svg>
<div style="position:absolute;left:232px;top:30px;white-space:nowrap;line-height:1;transform:translateY(-50%);font-family:'Liberation Sans',sans-serif;font-size:9.4px;color:#34507c;">插入</div>
<div style="position:absolute;left:272px;top:30px;white-space:nowrap;line-height:1;transform:translateY(-50%);font-family:'Liberation Sans',sans-serif;font-size:9.4px;color:#34507c;">页面布局</div>
<div style="position:absolute;left:330.5px;top:30px;white-space:nowrap;line-height:1;transform:translateY(-50%);font-family:'Liberation Sans',sans-serif;font-size:9.4px;color:#34507c;">公式</div>
<div style="position:absolute;left:371px;top:30px;white-space:nowrap;line-height:1;transform:translateY(-50%);font-family:'Liberation Sans',sans-serif;font-size:9.4px;color:#34507c;">数据</div>
<div style="position:absolute;left:411px;top:30px;white-space:nowrap;line-height:1;transform:translateY(-50%);font-family:'Liberation Sans',sans-serif;font-size:9.4px;color:#34507c;">审阅</div>
<div style="position:absolute;left:451px;top:30px;white-space:nowrap;line-height:1;transform:translateY(-50%);font-family:'Liberation Sans',sans-serif;font-size:9.4px;color:#34507c;">视图</div>
<div style="position:absolute;left:491px;top:30px;white-space:nowrap;line-height:1;transform:translateY(-50%);font-family:'Liberation Sans',sans-serif;font-size:9.4px;color:#34507c;">开发工具</div>
<div style="position:absolute;left:549px;top:30px;white-space:nowrap;line-height:1;transform:translateY(-50%);font-family:'Liberation Sans',sans-serif;font-size:9.4px;color:#34507c;">ChemOffice18</div>
<div style="position:absolute;left:1053px;top:24px;width:12px;height:12px;border-radius:50%;background:#e9eef6;border:1px solid #b9c6da;box-sizing:border-box"></div>
<div style="position:absolute;left:149px;top:42px;width:84.5px;height:76.5px;border-radius:3px;background:linear-gradient(#ebf0f8 0,#e3eaf5 79%,#cbd9ee 81.5%,#c5d5ec 100%);border:1px solid #c4d2e6;box-sizing:border-box;"></div>
<div style="position:absolute;left:184.5px;top:111px;white-space:nowrap;line-height:1;transform:translate(-50%,-50%);font-family:'Liberation Sans',sans-serif;font-size:9.3px;color:#5a76a0;">剪贴板</div>
<svg style="position:absolute;left:223.5px;top:107.5px" width="7" height="7"><path d="M0.5,5 L0.5,0.5 L5,0.5" fill="none" stroke="#8aa0bf" stroke-width="0.9"/><path d="M2.5,2.5 L5.5,5.5 M3.5,5.5 L5.5,5.5 L5.5,3.5" stroke="#4d6a94" stroke-width="1"/></svg>
<div style="position:absolute;left:236.5px;top:42px;width:177.0px;height:76.5px;border-radius:3px;background:linear-gradient(#ebf0f8 0,#e3eaf5 79%,#cbd9ee 81.5%,#c5d5ec 100%);border:1px solid #c4d2e6;box-sizing:border-box;"></div>
<div style="position:absolute;left:318.3px;top:111px;white-space:nowrap;line-height:1;transform:translate(-50%,-50%);font-family:'Liberation Sans',sans-serif;font-size:9.3px;color:#5a76a0;">字体</div>
<svg style="position:absolute;left:403.5px;top:107.5px" width="7" height="7"><path d="M0.5,5 L0.5,0.5 L5,0.5" fill="none" stroke="#8aa0bf" stroke-width="0.9"/><path d="M2.5,2.5 L5.5,5.5 M3.5,5.5 L5.5,5.5 L5.5,3.5" stroke="#4d6a94" stroke-width="1"/></svg>
<div style="position:absolute;left:416.5px;top:42px;width:173.0px;height:76.5px;border-radius:3px;background:linear-gradient(#ebf0f8 0,#e3eaf5 79%,#cbd9ee 81.5%,#c5d5ec 100%);border:1px solid #c4d2e6;box-sizing:border-box;"></div>
<div style="position:absolute;left:496px;top:111px;white-space:nowrap;line-height:1;transform:translate(-50%,-50%);font-family:'Liberation Sans',sans-serif;font-size:9.3px;color:#5a76a0;">对齐方式</div>
<svg style="position:absolute;left:579.5px;top:107.5px" width="7" height="7"><path d="M0.5,5 L0.5,0.5 L5,0.5" fill="none" stroke="#8aa0bf" stroke-width="0.9"/><path d="M2.5,2.5 L5.5,5.5 M3.5,5.5 L5.5,5.5 L5.5,3.5" stroke="#4d6a94" stroke-width="1"/></svg>
<div style="position:absolute;left:592.5px;top:42px;width:103.0px;height:76.5px;border-radius:3px;background:linear-gradient(#ebf0f8 0,#e3eaf5 79%,#cbd9ee 81.5%,#c5d5ec 100%);border:1px solid #c4d2e6;box-sizing:border-box;"></div>
<div style="position:absolute;left:637px;top:111px;white-space:nowrap;line-height:1;transform:translate(-50%,-50%);font-family:'Liberation Sans',sans-serif;font-size:9.3px;color:#5a76a0;">数字</div>
<svg style="position:absolute;left:685.5px;top:107.5px" width="7" height="7"><path d="M0.5,5 L0.5,0.5 L5,0.5" fill="none" stroke="#8aa0bf" stroke-width="0.9"/><path d="M2.5,2.5 L5.5,5.5 M3.5,5.5 L5.5,5.5 L5.5,3.5" stroke="#4d6a94" stroke-width="1"/></svg>
<div style="position:absolute;left:698px;top:42px;width:124.5px;height:76.5px;border-radius:3px;background:linear-gradient(#ebf0f8 0,#e3eaf5 79%,#cbd9ee 81.5%,#c5d5ec 100%);border:1px solid #c4d2e6;box-sizing:border-box;"></div>
<div style="position:absolute;left:760px;top:111px;white-space:nowrap;line-height:1;transform:translate(-50%,-50%);font-family:'Liberation Sans',sans-serif;font-size:9.3px;color:#5a76a0;">样式</div>
<div style="position:absolute;left:825.5px;top:42px;width:102.0px;height:76.5px;border-radius:3px;background:linear-gradient(#ebf0f8 0,#e3eaf5 79%,#cbd9ee 81.5%,#c5d5ec 100%);border:1px solid #c4d2e6;box-sizing:border-box;"></div>
<div style="position:absolute;left:876px;top:111px;white-space:nowrap;line-height:1;transform:translate(-50%,-50%);font-family:'Liberation Sans',sans-serif;font-size:9.3px;color:#5a76a0;">单元格</div>
<div style="position:absolute;left:929.5px;top:42px;width:182.5px;height:76.5px;border-radius:3px;background:linear-gradient(#ebf0f8 0,#e3eaf5 79%,#cbd9ee 81.5%,#c5d5ec 100%);border:1px solid #c4d2e6;box-sizing:border-box;"></div>
<div style="position:absolute;left:996px;top:111px;white-space:nowrap;line-height:1;transform:translate(-50%,-50%);font-family:'Liberation Sans',sans-serif;font-size:9.3px;color:#5a76a0;">编辑</div>
<div style="position:absolute;left:158px;top:45px;width:19.5px;height:22.5px;background:linear-gradient(90deg,#f4f4f4,#ffffff 40%,#f0f0f0);border:1px solid #cfd6e0;box-sizing:border-box;"></div>
<div style="position:absolute;left:158.5px;top:80.5px;white-space:nowrap;line-height:1;transform:translateY(-50%);font-family:'Liberation Sans',sans-serif;font-size:9.3px;color:#3a5078;">粘贴</div>
<svg style="position:absolute;left:165px;top:91px" width="5" height="3"><polygon points="0,0 5,0 2.5,3" fill="#4a5f80"/></svg>
<svg style="position:absolute;left:186.5px;top:64.5px" width="11" height="9"><rect x="0.5" y="0.5" width="6" height="6" fill="#fff" stroke="#7d8fb0" stroke-width="0.8"/><rect x="4" y="2.5" width="6" height="6" fill="#dfe8f6" stroke="#5d73a0" stroke-width="0.8"/></svg>
<div style="position:absolute;left:200.5px;top:68.8px;white-space:nowrap;line-height:1;transform:translateY(-50%);font-family:'Liberation Sans',sans-serif;font-size:9.3px;color:#3a5078;">复制</div>
<svg style="position:absolute;left:186px;top:79px" width="12" height="12"><path d="M1,11 L6,6" stroke="#c8a03a" stroke-width="3"/><rect x="6" y="1" width="5" height="6" transform="rotate(45 8.5 4)" fill="#8a8fa0"/></svg>
<div style="position:absolute;left:200.5px;top:85.4px;white-space:nowrap;line-height:1;transform:translateY(-50%);font-family:'Liberation Sans',sans-serif;font-size:9.3px;color:#3a5078;">格式刷</div>
<div style="position:absolute;left:240px;top:51.5px;width:98.5px;height:19px;background:#f8fafd;border:1px solid #c7d4e6;box-sizing:border-box;"></div>
<div style="position:absolute;left:241.5px;top:61px;white-space:nowrap;line-height:1;transform:translateY(-50%);font-family:'Liberation Sans',sans-serif;font-size:10px;color:#222;">等线</div>
<svg style="position:absolute;left:331.5px;top:60.3px" width="4" height="3"><polygon points="0,0 4,0 2,2.5" fill="#5d7194"/></svg>
<div style="position:absolute;left:339px;top:51.5px;width:35px;height:19px;background:#f8fafd;border:1px solid #c7d4e6;box-sizing:border-box;"></div>
<div style="position:absolute;left:341.5px;top:61px;white-space:nowrap;line-height:1;transform:translateY(-50%);font-family:'Liberation Sans',sans-serif;font-size:10.5px;color:#222;">11</div>
<svg style="position:absolute;left:368.5px;top:60.3px" width="4" height="3"><polygon points="0,0 4,0 2,2.5" fill="#5d7194"/></svg>
<div style="position:absolute;left:377.5px;top:51.5px;width:33.0px;height:17.5px;border-radius:2px;background:linear-gradient(#f3f6fb,#dfe7f2);border:1px solid #b9c9df;box-sizing:border-box;"></div>
<div style="position:absolute;left:380px;top:53px;font:bold 14px 'Liberation Serif',serif;color:#2d3a4e">A<span style="font-size:8px;vertical-align:top">^</span></div>
<div style="position:absolute;left:396px;top:56px;font:bold 11px 'Liberation Serif',serif;color:#2d3a4e">A<span style="font-size:8px;vertical-align:top">ˇ</span></div>
<div style="position:absolute;left:239.5px;top:79px;width:60.0px;height:16.5px;border-radius:2px;background:linear-gradient(#f3f6fb,#dfe7f2);border:1px solid #b9c9df;box-sizing:border-box;"></div>
<div style="position:absolute;left:248.5px;top:87px;white-space:nowrap;line-height:1;transform:translate(-50%,-50%);font:bold 12px 'Liberation Serif',serif;color:#222;">B</div>
<div style="position:absolute;left:266px;top:87px;white-space:nowrap;line-height:1;transform:translate(-50%,-50%);font:italic bold 12px 'Liberation Serif',serif;color:#222;">I</div>
<div style="position:absolute;left:283px;top:87px;white-space:nowrap;line-height:1;transform:translate(-50%,-50%);font:bold 11px 'Liberation Serif',serif;color:#222;"><u>U</u></div>
<svg style="position:absolute;left:292.5px;top:86.3px" width="4" height="3"><polygon points="0,0 4,0 2,2.5" fill="#5d7194"/></svg>
<div style="position:absolute;left:302px;top:79px;width:26px;height:16.5px;border-radius:2px;background:linear-gradient(#f3f6fb,#dfe7f2);border:1px solid #b9c9df;box-sizing:border-box;"></div>
<svg style="position:absolute;left:306px;top:81px" width="13" height="12"><rect x="0.5" y="0.5" width="11" height="10" fill="none" stroke="#98a8bd"/><path d="M6,0 L6,11 M0,5.5 L12,5.5" stroke="#98a8bd"/><rect x="0" y="10" width="12" height="1.5" fill="#50607a"/></svg>
<svg style="position:absolute;left:319.5px;top:86.3px" width="4" height="3"><polygon points="0,0 4,0 2,2.5" fill="#5d7194"/></svg>
<div style="position:absolute;left:331px;top:79px;width:50.5px;height:16.5px;border-radius:2px;background:linear-gradient(#f3f6fb,#dfe7f2);border:1px solid #b9c9df;box-sizing:border-box;"></div>
<svg style="position:absolute;left:334px;top:80px" width="15" height="14"><path d="M3,9 L7,3 L11,8 L7,10 Z" fill="#fff" stroke="#555" stroke-width="1"/><circle cx="12" cy="9" r="1.5" fill="#3b6fb6"/><rect x="1" y="11" width="13" height="3" fill="#f5ea2c"/></svg>
<svg style="position:absolute;left:351.5px;top:86.3px" width="4" height="3"><polygon points="0,0 4,0 2,2.5" fill="#5d7194"/></svg>
<div style="position:absolute;left:366px;top:86px;white-space:nowrap;line-height:1;transform:translate(-50%,-50%);font:bold 12px 'Liberation Sans',sans-serif;color:#2a3f8a;">A</div>
<div style="position:absolute;left:360px;top:92px;width:13px;height:3px;background:#e0262b;"></div>
<svg style="position:absolute;left:375.5px;top:86.3px" width="4" height="3"><polygon points="0,0 4,0 2,2.5" fill="#5d7194"/></svg>
<div style="position:absolute;left:384.5px;top:79px;width:26.0px;height:16.5px;border-radius:2px;background:linear-gradient(#f3f6fb,#dfe7f2);border:1px solid #b9c9df;box-sizing:border-box;"></div>
<div style="position:absolute;left:394px;top:87.5px;white-space:nowrap;line-height:1;transform:translate(-50%,-50%);font-family:'Liberation Sans',sans-serif;font-size:12px;color:#3050b0;">文</div>
<div style="position:absolute;left:394px;top:81.5px;white-space:nowrap;line-height:1;transform:translate(-50%,-50%);font-family:'Liberation Sans',sans-serif;font-size:5px;color:#444;">wén</div>
<svg style="position:absolute;left:404.5px;top:86.3px" width="4" height="3"><polygon points="0,0 4,0 2,2.5" fill="#5d7194"/></svg>
<div style="position:absolute;left:419.4px;top:53.3px;width:52.0px;height:16.0px;border-radius:2px;background:linear-gradient(#f3f6fb,#dfe7f2);border:1px solid #b9c9df;box-sizing:border-box;"></div>
<div style="position:absolute;left:436.3px;top:54.3px;width:17.8px;height:14px;background:linear-gradient(#fbd38a,#fde9a8);"></div>
<div style="position:absolute;left:423px;top:56.0px;width:10.7px;height:1.5px;background:#5e6168;"></div>
<div style="position:absolute;left:423px;top:57.8px;width:10.7px;height:1.5px;background:#5e6168;"></div>
<div style="position:absolute;left:423px;top:59.6px;width:10.7px;height:1.5px;background:#5e6168;"></div>
<div style="position:absolute;left:440.3px;top:58.7px;width:10.7px;height:1.6px;background:#6a5a3c;"></div>
<div style="position:absolute;left:440.3px;top:60.6px;width:10.7px;height:1.6px;background:#6a5a3c;"></div>
<div style="position:absolute;left:440.3px;top:62.5px;width:10.7px;height:1.6px;background:#6a5a3c;"></div>
<div style="position:absolute;left:458px;top:61.2px;width:10.8px;height:1.5px;background:#5e6168;"></div>
<div style="position:absolute;left:458px;top:63.0px;width:10.8px;height:1.5px;background:#5e6168;"></div>
<div style="position:absolute;left:458px;top:64.8px;width:10.8px;height:1.5px;background:#5e6168;"></div>
<div style="position:absolute;left:474px;top:53.3px;width:23.19999999999999px;height:16.0px;border-radius:2px;background:linear-gradient(#f3f6fb,#dfe7f2);border:1px solid #b9c9df;box-sizing:border-box;"></div>
<svg style="position:absolute;left:477px;top:55px" width="20" height="13"><path d="M2,8 L7,3 M4,10 L10,4 M6,12 L12,6" stroke="#3f4248" stroke-width="1.4"/><path d="M4,11 L11,6" stroke="#3f4248" stroke-width="0.8"/><circle cx="13" cy="7" r="0.8" fill="#444"/></svg>
<svg style="position:absolute;left:490.5px;top:60.3px" width="4" height="3"><polygon points="0,0 4,0 2,2.5" fill="#5a7ab0"/></svg>
<div style="position:absolute;left:511px;top:52px;width:1px;height:44px;background:#c3d1e5;"></div>
<div style="position:absolute;left:514px;top:53.5px;width:56.5px;height:16px;border-radius:2px;background:linear-gradient(#fbd796,#f9e2a2);border:1px solid #e2b45e;box-sizing:border-box;"></div>
<svg style="position:absolute;left:516px;top:55.5px" width="13" height="12"><rect x="1" y="1" width="9" height="1.8" fill="#6a6a6a"/><rect x="1" y="4.5" width="6" height="1.8" fill="#6a6a6a"/><rect x="1" y="8" width="6" height="1.8" fill="#6a6a6a"/><path d="M8,5.5 L11,5.5 L11,9 L8,9" stroke="#6a6a6a" stroke-width="1.2" fill="none"/><rect x="1" y="1" width="1.3" height="9" fill="#888"/></svg>
<div style="position:absolute;left:530.5px;top:61.5px;white-space:nowrap;line-height:1;transform:translateY(-50%);font-family:'Liberation Sans',sans-serif;font-size:9.3px;color:#3a5078;">自动换行</div>
<div style="position:absolute;left:419.4px;top:78.7px;width:52.0px;height:15.5px;border-radius:2px;background:linear-gradient(#f3f6fb,#dfe7f2);border:1px solid #b9c9df;box-sizing:border-box;"></div>
<div style="position:absolute;left:436.3px;top:79.7px;width:17.8px;height:13.5px;background:linear-gradient(#fbd38a,#fde9a8);"></div>
<div style="position:absolute;left:423px;top:81.3px;width:10.7px;height:1.3px;background:#5e6168;"></div>
<div style="position:absolute;left:423px;top:83.05px;width:7px;height:1.3px;background:#5e6168;"></div>
<div style="position:absolute;left:423px;top:84.8px;width:10.7px;height:1.3px;background:#5e6168;"></div>
<div style="position:absolute;left:423px;top:86.55px;width:7px;height:1.3px;background:#5e6168;"></div>
<div style="position:absolute;left:423px;top:88.3px;width:10.7px;height:1.3px;background:#5e6168;"></div>
<div style="position:absolute;left:440.3px;top:81.3px;width:10.7px;height:1.3px;background:#6a5a3c;"></div>
<div style="position:absolute;left:440.3px;top:83.05px;width:10.7px;height:1.3px;background:#6a5a3c;"></div>
<div style="position:absolute;left:440.3px;top:84.8px;width:10.7px;height:1.3px;background:#6a5a3c;"></div>
<div style="position:absolute;left:440.3px;top:86.55px;width:10.7px;height:1.3px;background:#6a5a3c;"></div>
<div style="position:absolute;left:440.3px;top:88.3px;width:10.7px;height:1.3px;background:#6a5a3c;"></div>
<div style="position:absolute;left:458.0px;top:81.3px;width:10.8px;height:1.3px;background:#5e6168;"></div>
<div style="position:absolute;left:461.8px;top:83.05px;width:7px;height:1.3px;background:#5e6168;"></div>
<div style="position:absolute;left:458.0px;top:84.8px;width:10.8px;height:1.3px;background:#5e6168;"></div>
<div style="position:absolute;left:461.8px;top:86.55px;width:7px;height:1.3px;background:#5e6168;"></div>
<div style="position:absolute;left:458.0px;top:88.3px;width:10.8px;height:1.3px;background:#5e6168;"></div>
<div style="position:absolute;left:474px;top:78.7px;width:33.39999999999998px;height:15.5px;border-radius:2px;background:linear-gradient(#f3f6fb,#dfe7f2);border:1px solid #b9c9df;box-sizing:border-box;"></div>
<svg style="position:absolute;left:476px;top:80px" width="30" height="13"><path d="M7.5,0.5 L7.5,12.5" stroke="#555" stroke-width="0.8"/><rect x="9" y="2" width="7" height="2" fill="#666"/><rect x="9" y="6" width="7" height="1.6" fill="#222"/><rect x="9" y="9" width="7" height="1.6" fill="#666"/><rect x="3" y="2" width="3" height="1.5" fill="#888"/><rect x="3" y="9" width="3" height="1.5" fill="#888"/><path d="M1,6.5 L5,4.5 L5,8.5 Z" fill="#4a7ad0"/><path d="M24.5,0.5 L24.5,12.5" stroke="#555" stroke-width="0.8"/><rect x="26" y="2" width="3.5" height="2" fill="#666"/><rect x="26" y="6" width="3.5" height="1.6" fill="#222"/><rect x="26" y="9" width="3.5" height="1.6" fill="#666"/><rect x="19" y="2" width="3" height="1.5" fill="#888"/><rect x="19" y="9" width="3" height="1.5" fill="#888"/><path d="M23,6.5 L19,4.5 L19,8.5 Z" fill="#4a7ad0"/></svg>
<svg style="position:absolute;left:516px;top:80px" width="14" height="13"><rect x="0.5" y="0.5" width="13" height="12" fill="#f4f4f4" stroke="#6a6a6a"/><path d="M0.5,4 L13.5,4 M0.5,9 L13.5,9" stroke="#9a9a9a" stroke-width="0.8"/><path d="M3,6.5 L11,6.5" stroke="#333" stroke-width="1.6"/><path d="M3,6.5 L5,5 L5,8 Z M11,6.5 L9,5 L9,8 Z" fill="#333"/></svg>
<div style="position:absolute;left:531px;top:87px;white-space:nowrap;line-height:1;transform:translateY(-50%);font-family:'Liberation Sans',sans-serif;font-size:9.3px;color:#3a5078;">合并后居中</div>
<svg style="position:absolute;left:580.5px;top:86.3px" width="4" height="3"><polygon points="0,0 4,0 2,2.5" fill="#5a7ab0"/></svg>
<div style="position:absolute;left:595.5px;top:51.5px;width:97px;height:19px;background:#f8fafd;border:1px solid #c7d4e6;box-sizing:border-box;"></div>
<div style="position:absolute;left:598px;top:61px;white-space:nowrap;line-height:1;transform:translateY(-50%);font-family:'Liberation Sans',sans-serif;font-size:10px;color:#222;">常规</div>
<svg style="position:absolute;left:686.5px;top:60.3px" width="4" height="3"><polygon points="0,0 4,0 2,2.5" fill="#5d7194"/></svg>
<div style="position:absolute;left:595.5px;top:79px;width:60.5px;height:16.5px;border-radius:2px;background:linear-gradient(#f3f6fb,#dfe7f2);border:1px solid #b9c9df;box-sizing:border-box;"></div>
<div style="position:absolute;left:603.5px;top:87px;white-space:nowrap;line-height:1;transform:translate(-50%,-50%);font:bold 12px 'Liberation Serif',serif;color:#222;">$</div>
<svg style="position:absolute;left:612.5px;top:86.3px" width="4" height="3"><polygon points="0,0 4,0 2,2.5" fill="#5d7194"/></svg>
<div style="position:absolute;left:630px;top:87.5px;white-space:nowrap;line-height:1;transform:translate(-50%,-50%);font:bold 10.5px 'Liberation Sans',sans-serif;color:#3a3a3a;">%</div>
<div style="position:absolute;left:647.5px;top:84.5px;white-space:nowrap;line-height:1;transform:translate(-50%,-50%);font:bold 13px 'Liberation Serif',serif;color:#222;">,</div>
<div style="position:absolute;left:658.5px;top:79px;width:34.0px;height:16.5px;border-radius:2px;background:linear-gradient(#f3f6fb,#dfe7f2);border:1px solid #b9c9df;box-sizing:border-box;"></div>
<div style="position:absolute;left:668px;top:87px;white-space:nowrap;line-height:1;transform:translate(-50%,-50%);font:bold 7px 'Liberation Sans',sans-serif;color:#333;text-align:right"><span style="line-height:7px;display:block">.0</span><span style="line-height:7px;display:block">.00</span></div>
<svg style="position:absolute;left:661px;top:82px" width="6" height="4"><path d="M0.5,2 L5.5,2 M0.5,2 L2.5,0.5 M0.5,2 L2.5,3.5" stroke="#4a6ad0" stroke-width="1"/></svg>
<svg style="position:absolute;left:677px;top:88px" width="6" height="4"><path d="M0.5,2 L5.5,2 M5.5,2 L3.5,0.5 M5.5,2 L3.5,3.5" stroke="#4a6ad0" stroke-width="1"/></svg>
<div style="position:absolute;left:684px;top:87px;white-space:nowrap;line-height:1;transform:translate(-50%,-50%);font:bold 7px 'Liberation Sans',sans-serif;color:#333;text-align:right"><span style="line-height:7px;display:block">.00</span><span style="line-height:7px;display:block">.0</span></div>
<svg style="position:absolute;left:707px;top:46px" width="25" height="23"><g fill="#fff" stroke="#9aa7b8" stroke-width="0.6"><rect x="1" y="1" width="5" height="4"/><rect x="6" y="1" width="5" height="4"/><rect x="11" y="1" width="5" height="4"/><rect x="16" y="1" width="5" height="4"/><rect x="1" y="5" width="5" height="4"/><rect x="11" y="5" width="5" height="4"/><rect x="16" y="5" width="5" height="4"/><rect x="1" y="9" width="5" height="4"/><rect x="16" y="9" width="5" height="4"/><rect x="1" y="13" width="5" height="4"/><rect x="1" y="17" width="5" height="4"/></g><rect x="6" y="1" width="5" height="5" fill="#e0463a"/><rect x="6" y="5" width="10" height="4" fill="#6f8fd8"/><rect x="6" y="9" width="9" height="4" fill="#e0463a"/><rect x="6" y="13" width="5" height="6" fill="#6f8fd8"/><rect x="13" y="13" width="11" height="9" fill="#f3f3f3" stroke="#555" stroke-width="0.8"/><path d="M15,16 L22,16 M15,19 L22,19" stroke="#333"/></svg>
<div style="position:absolute;left:720.5px;top:79.5px;white-space:nowrap;line-height:1;transform:translate(-50%,-50%);font-family:'Liberation Sans',sans-serif;font-size:9.3px;color:#3a5078;">条件格式</div>
<svg style="position:absolute;left:718.5px;top:90.3px" width="4" height="3"><polygon points="0,0 4,0 2,2.5" fill="#5d7194"/></svg>
<svg style="position:absolute;left:752px;top:46px" width="25" height="23"><g fill="#fff" stroke="#8fa4c4" stroke-width="0.6"><rect x="1" y="1" width="5" height="4"/><rect x="6" y="1" width="5" height="4"/><rect x="11" y="1" width="5" height="4"/><rect x="16" y="1" width="5" height="4"/><rect x="1" y="5" width="5" height="4"/><rect x="1" y="9" width="5" height="4"/><rect x="1" y="13" width="5" height="4"/><rect x="1" y="17" width="5" height="4"/></g><rect x="6" y="5" width="15" height="16" fill="#a9bde6"/><path d="M10,20 L22,6" stroke="#7b6a55" stroke-width="3"/><path d="M7,22 L11,19" stroke="#5f7fc4" stroke-width="3"/></svg>
<div style="position:absolute;left:763.7px;top:79.5px;white-space:nowrap;line-height:1;transform:translate(-50%,-50%);font-family:'Liberation Sans',sans-serif;font-size:9.3px;color:#3a5078;">套用</div>
<div style="position:absolute;left:761px;top:92px;white-space:nowrap;line-height:1;transform:translate(-50%,-50%);font-family:'Liberation Sans',sans-serif;font-size:9.3px;color:#3a5078;">表格格式</div>
<svg style="position:absolute;left:782.5px;top:90.8px" width="4" height="3"><polygon points="0,0 4,0 2,2.5" fill="#5d7194"/></svg>
<svg style="position:absolute;left:790px;top:46px" width="26" height="23"><rect x="1" y="2" width="21" height="17" fill="#fff" stroke="#8fa4c4"/><rect x="4" y="5" width="15" height="11" fill="#8fb0e8"/><path d="M12,21 L24,8" stroke="#7b6a55" stroke-width="3"/><path d="M9,23 L13,20" stroke="#5f7fc4" stroke-width="3"/></svg>
<div style="position:absolute;left:803.5px;top:79.5px;white-space:nowrap;line-height:1;transform:translate(-50%,-50%);font-family:'Liberation Sans',sans-serif;font-size:9.3px;color:#3a5078;">单元格</div>
<div style="position:absolute;left:800.5px;top:92px;white-space:nowrap;line-height:1;transform:translate(-50%,-50%);font-family:'Liberation Sans',sans-serif;font-size:9.3px;color:#3a5078;">样式</div>
<svg style="position:absolute;left:812.5px;top:90.8px" width="4" height="3"><polygon points="0,0 4,0 2,2.5" fill="#5d7194"/></svg>
<svg style="position:absolute;left:831px;top:46px" width="26" height="22"><g fill="#fff" stroke="#8c9ab0" stroke-width="0.8"><rect x="1" y="1" width="6" height="4"/><rect x="7" y="1" width="6" height="4"/><rect x="1" y="15" width="6" height="4"/><rect x="7" y="15" width="6" height="4"/><rect x="1" y="5" width="6" height="4"/><rect x="1" y="11" width="6" height="4"/></g><rect x="13" y="7" width="12" height="5" fill="#7d9ee0" stroke="#5a78b8" stroke-width="0.6"/><path d="M5,9.5 L12,9.5 M5,9.5 L7,8 M5,9.5 L7,11" stroke="#333" stroke-width="0.9"/></svg>
<div style="position:absolute;left:843.5px;top:80px;white-space:nowrap;line-height:1;transform:translate(-50%,-50%);font-family:'Liberation Sans',sans-serif;font-size:9.3px;color:#3a5078;">插入</div>
<svg style="position:absolute;left:841.5px;top:91.3px" width="4" height="3"><polygon points="0,0 4,0 2,2.5" fill="#5d7194"/></svg>
<svg style="position:absolute;left:865px;top:46px" width="22" height="22"><g fill="#fff" stroke="#8c9ab0" stroke-width="0.8"><rect x="1" y="1" width="6" height="4"/><rect x="7" y="1" width="6" height="4"/><rect x="1" y="15" width="6" height="4"/><rect x="7" y="15" width="6" height="4"/><rect x="1" y="11" width="6" height="4"/></g><rect x="4" y="6" width="10" height="5" fill="#dfe6f1" stroke="#8c9ab0" stroke-width="0.6"/><path d="M12,5 L20,13 M20,5 L12,13" stroke="#e23b2c" stroke-width="1.6"/></svg>
<div style="position:absolute;left:875.5px;top:80px;white-space:nowrap;line-height:1;transform:translate(-50%,-50%);font-family:'Liberation Sans',sans-serif;font-size:9.3px;color:#3a5078;">删除</div>
<svg style="position:absolute;left:873.5px;top:91.3px" width="4" height="3"><polygon points="0,0 4,0 2,2.5" fill="#5d7194"/></svg>
<svg style="position:absolute;left:895px;top:46px" width="24" height="22"><rect x="1" y="2" width="22" height="18" fill="#fff" stroke="#8c9ab0"/><path d="M1,8 L23,8 M1,14 L23,14 M7,2 L7,20 M17,2 L17,20" stroke="#b9c3d2"/><rect x="8" y="6" width="8" height="9" fill="#7d9ee0"/><path d="M1,1 L23,1" stroke="#333"/></svg>
<div style="position:absolute;left:907px;top:80px;white-space:nowrap;line-height:1;transform:translate(-50%,-50%);font-family:'Liberation Sans',sans-serif;font-size:9.3px;color:#3a5078;">格式</div>
<svg style="position:absolute;left:905.5px;top:91.3px" width="4" height="3"><polygon points="0,0 4,0 2,2.5" fill="#5d7194"/></svg>
<div style="position:absolute;left:940px;top:51.5px;white-space:nowrap;line-height:1;transform:translate(-50%,-50%);font:bold 12px 'Liberation Serif',serif;color:#222;">Σ</div>
<div style="position:absolute;left:950px;top:52px;white-space:nowrap;line-height:1;transform:translateY(-50%);font-family:'Liberation Sans',sans-serif;font-size:9.3px;color:#3a5078;">自动求和</div>
<svg style="position:absolute;left:989.5px;top:51.3px" width="4" height="3"><polygon points="0,0 4,0 2,2.5" fill="#5d7194"/></svg>
<svg style="position:absolute;left:934px;top:62px" width="12" height="13"><rect x="0.5" y="0.5" width="11" height="12" fill="#eef3fb" stroke="#7d90b0"/><path d="M6,3 L6,9 M3,6.5 L6,10 L9,6.5" stroke="#2f6fd0" stroke-width="1.6" fill="none"/></svg>
<div style="position:absolute;left:950px;top:69px;white-space:nowrap;line-height:1;transform:translateY(-50%);font-family:'Liberation Sans',sans-serif;font-size:9.3px;color:#3a5078;">填充</div>
<svg style="position:absolute;left:971.5px;top:68.3px" width="4" height="3"><polygon points="0,0 4,0 2,2.5" fill="#5d7194"/></svg>
<svg style="position:absolute;left:934px;top:79px" width="13" height="12"><path d="M1,9 L7,2 L12,6 L7,11 L2,11 Z" fill="#f4f4f4" stroke="#777"/></svg>
<div style="position:absolute;left:950px;top:85.5px;white-space:nowrap;line-height:1;transform:translateY(-50%);font-family:'Liberation Sans',sans-serif;font-size:9.3px;color:#3a5078;">清除</div>
<svg style="position:absolute;left:971.5px;top:85.3px" width="4" height="3"><polygon points="0,0 4,0 2,2.5" fill="#5d7194"/></svg>
<svg style="position:absolute;left:999px;top:46px" width="26" height="22"><text x="0" y="10" font-family="Liberation Serif" font-weight="bold" font-size="10" fill="#3a6fc0">A</text><text x="0" y="21" font-family="Liberation Serif" font-weight="bold" font-size="11" fill="#c0392b">Z</text><path d="M9,5 L24,5 L18,12 L18,20 L15,18 L15,12 Z" fill="#c9ced6" stroke="#8a93a3" stroke-width="0.7"/></svg>
<div style="position:absolute;left:1011px;top:80px;white-space:nowrap;line-height:1;transform:translate(-50%,-50%);font-family:'Liberation Sans',sans-serif;font-size:9.3px;color:#3a5078;">排序和</div>
<div style="position:absolute;left:1008px;top:92px;white-space:nowrap;line-height:1;transform:translate(-50%,-50%);font-family:'Liberation Sans',sans-serif;font-size:9.3px;color:#3a5078;">筛选</div>
<svg style="position:absolute;left:1020.5px;top:90.8px" width="4" height="3"><polygon points="0,0 4,0 2,2.5" fill="#5d7194"/></svg>
<svg style="position:absolute;left:1032px;top:46px" width="22" height="22"><rect x="2" y="4" width="7" height="17" rx="2" fill="#8ea6cf" stroke="#5a6f96" stroke-width="0.8"/><rect x="12" y="4" width="7" height="17" rx="2" fill="#8ea6cf" stroke="#5a6f96" stroke-width="0.8"/><rect x="4" y="1" width="4" height="5" fill="#6a7fa8"/><rect x="13" y="1" width="4" height="5" fill="#6a7fa8"/><rect x="8" y="9" width="5" height="5" fill="#6a7fa8"/></svg>
<div style="position:absolute;left:1043px;top:80px;white-space:nowrap;line-height:1;transform:translate(-50%,-50%);font-family:'Liberation Sans',sans-serif;font-size:9.3px;color:#3a5078;">查找和</div>
<div style="position:absolute;left:1040px;top:92px;white-space:nowrap;line-height:1;transform:translate(-50%,-50%);font-family:'Liberation Sans',sans-serif;font-size:9.3px;color:#3a5078;">选择</div>
<svg style="position:absolute;left:1053.5px;top:90.8px" width="4" height="3"><polygon points="0,0 4,0 2,2.5" fill="#5d7194"/></svg>
<div style="position:absolute;left:199px;top:130.8px;white-space:nowrap;line-height:1;transform:translate(-50%,-50%) scaleX(0.85);font-family:'Liberation Serif',serif;font-size:12px;color:#222;-webkit-text-stroke:0.2px #222;">A1</div>
<svg style="position:absolute;left:257px;top:129px" width="7" height="4"><polygon points="0,0 7,0 3.5,4" fill="#222"/></svg>
<div style="position:absolute;left:268px;top:123.6px;width:58px;height:13.4px;border-radius:7px 0 0 7px;background:linear-gradient(#f0f4fa,#d6e0ee 50%,#b9c9df);border:1px solid #a9bad3;box-sizing:border-box;"></div>
<div style="position:absolute;left:271px;top:126.5px;width:7px;height:7px;border-radius:50%;background:radial-gradient(circle at 40% 40%,#f6f6f6,#b0b8c4)"></div>
<div style="position:absolute;left:317.5px;top:130.5px;white-space:nowrap;line-height:1;transform:translate(-50%,-50%);font:italic 11px 'Liberation Serif',serif;color:#444;">f<span style="font-size:8px">x</span></div>
<div style="position:absolute;left:333.5px;top:130.5px;white-space:nowrap;line-height:1;transform:translateY(-50%);font-family:'Liberation Sans',sans-serif;font-size:12px;color:#222;">年级</div>
<div style="position:absolute;left:1101.5px;top:141px;width:2px;height:384px;background:#e8eef7;"></div>
<div style="position:absolute;left:1103.5px;top:141px;width:14px;height:384px;background:linear-gradient(90deg,#9fb6dc,#94acd6 40%,#9ab2da 85%,#c6d6ee);"></div>
<div style="position:absolute;left:1104.6px;top:141.8px;width:10.4px;height:5px;background:#f2f5fa;border:0.8px solid #8fa3c4;box-sizing:border-box;"></div>
<div style="position:absolute;left:1106.5px;top:143.8px;width:6.5px;height:0.8px;background:#5a6a82;"></div>
<svg style="position:absolute;left:1106px;top:152.3px" width="8" height="4"><polygon points="0,3.5 7,3.5 3.5,0" fill="#3f5a88"/></svg>
<div style="position:absolute;left:1104.6px;top:160.8px;width:10.4px;height:11.2px;background:linear-gradient(90deg,#f4f6fa,#e2e8f1);border:0.8px solid #8fa3c4;box-sizing:border-box;border-radius:1px"></div>
<div style="position:absolute;left:1106.8px;top:163.0px;width:6px;height:0.9px;background:#a7b0bd;"></div>
<div style="position:absolute;left:1106.8px;top:164.8px;width:6px;height:0.9px;background:#a7b0bd;"></div>
<div style="position:absolute;left:1106.8px;top:166.6px;width:6px;height:0.9px;background:#a7b0bd;"></div>
<div style="position:absolute;left:1106.8px;top:168.4px;width:6px;height:0.9px;background:#a7b0bd;"></div>
<svg style="position:absolute;left:1106px;top:516px" width="8" height="4"><polygon points="0,0 7,0 3.5,3.5" fill="#3f5a88"/></svg>
<div style="position:absolute;left:146px;top:525px;width:971.5px;height:12.5px;background:linear-gradient(#9fb5da,#a9bde0 50%,#9fb4d8);border-top:1px solid #8ea2c4;box-sizing:border-box;"></div>
<div style="position:absolute;left:146px;top:525px;width:48.5px;height:12.5px;background:linear-gradient(#e6edf8,#c9d8ef 55%,#dbe5f4);border-top:1px solid #9aa6b8;border-right:1px solid #9aa9c0;box-sizing:border-box;"></div>
<svg style="position:absolute;left:149px;top:527px" width="44" height="9"><g fill="#203c7a"><rect x="2" y="1" width="1.2" height="6.5"/><polygon points="6.8,1 6.8,7.5 3.2,4.25"/><polygon points="17.5,1 17.5,7.5 14,4.25"/><polygon points="25,1 25,7.5 28.5,4.25"/><polygon points="35.3,1 35.3,7.5 39,4.25"/><rect x="39" y="1" width="1.2" height="6.5"/></g></svg>
<svg style="position:absolute;left:194px;top:525px" width="270" height="13"><path d="M0,0 L270,0 L262,12.5 L0,12.5 Z" fill="#dfe7f4"/><path d="M0,0.5 L82,0.5 L74.5,12.5 L0,12.5 Z" fill="#ffffff"/><path d="M74.5,12.3 L82,0.5 M160,12.3 L168,0.5 M226.6,12.3 L234,0.5 M251,12.3 L260,0.5" stroke="#98acc9" stroke-width="1" fill="none"/><path d="M74.5,12.5 L262,12.5" stroke="#8ea2c4" stroke-width="1"/></svg>
<div style="position:absolute;left:200.5px;top:531.3px;white-space:nowrap;line-height:1;transform:translateY(-50%);font-family:'Liberation Sans',sans-serif;font-size:10.6px;color:#2e4670;">核酸检测统计</div>
<div style="position:absolute;left:276.5px;top:531.3px;white-space:nowrap;line-height:1;transform:translateY(-50%);font-family:'Liberation Sans',sans-serif;font-size:10.6px;color:#2e4670;">在校生网格结构</div>
<div style="position:absolute;left:362.5px;top:531.3px;white-space:nowrap;line-height:1;transform:translateY(-50%);font-family:'Liberation Sans',sans-serif;font-size:10.6px;color:#2e4670;">需每日监控</div>
<svg style="position:absolute;left:429px;top:526px" width="14" height="11"><rect x="4" y="3" width="9" height="7" rx="1" fill="#f4f6fa" stroke="#8a98ad" stroke-width="0.8"/><circle cx="4" cy="3.5" r="2.6" fill="#f3c04a" stroke="#d9962a" stroke-width="0.5"/></svg>
<div style="position:absolute;left:720.5px;top:526px;width:5.5px;height:11px;background:#f4f7fb;border:1px solid #b4c3da;box-sizing:border-box;"></div>
<div style="position:absolute;left:722.5px;top:528px;width:1.2px;height:7px;background:#6a7a92;"></div>
<div style="position:absolute;left:726px;top:526px;width:14px;height:11px;background:#8fa6cd;"></div>
<svg style="position:absolute;left:731px;top:528px" width="5" height="7"><polygon points="5,0 5,7 0,3.5" fill="#23345a"/></svg>
<div style="position:absolute;left:740px;top:526.5px;width:315.5px;height:10.5px;border-radius:2px;background:linear-gradient(#f6f8fb,#e6eaf1 50%,#bfc8d6);border:1px solid #8fa0bd;box-sizing:border-box;"></div>
<div style="position:absolute;left:893px;top:528.5px;width:7px;height:5px;background:repeating-linear-gradient(90deg,#97a9c3 0 1px,transparent 1px 2px);"></div>
<div style="position:absolute;left:1056px;top:526px;width:44px;height:11px;background:#a8bce0;"></div>
<svg style="position:absolute;left:1088px;top:528px" width="5" height="7"><polygon points="0,0 0,7 5,3.5" fill="#23345a"/></svg>
<div style="position:absolute;left:1097.5px;top:526px;width:5.5px;height:11px;background:#f4f7fb;border:1px solid #b4c3da;box-sizing:border-box;"></div>
<div style="position:absolute;left:1099.5px;top:528px;width:1.2px;height:7px;background:#6a7a92;"></div>
<div style="position:absolute;left:146px;top:537px;width:971.5px;height:17px;background:linear-gradient(#9fb4d4 0,#9fb4d4 1px,#cfddf1 1.5px,#dde8f7 6px,#d3e0f3 14px,#c2d3ec 17px);"></div>
<div style="position:absolute;left:151.5px;top:545.3px;white-space:nowrap;line-height:1;transform:translateY(-50%);font-family:'Liberation Sans',sans-serif;font-size:9.5px;color:#2a4570;">就绪</div>
<div style="position:absolute;left:176.5px;top:539px;width:1px;height:13px;background:#b3c4dc;"></div>
<div style="position:absolute;left:202.5px;top:539px;width:1px;height:13px;background:#b3c4dc;"></div>
<svg style="position:absolute;left:183px;top:539.5px" width="13" height="11"><rect x="0.5" y="0.5" width="12" height="10" fill="#f4f6fa" stroke="#8a9ab5" stroke-width="0.8"/><rect x="5" y="1" width="7.5" height="3" fill="#5c84cc"/><rect x="3" y="4" width="2" height="6" fill="#c9d3e3"/><rect x="6" y="6" width="2" height="4" fill="#c9d3e3"/><circle cx="3" cy="2.5" r="2.2" fill="#e05a3a"/></svg>
<div style="position:absolute;left:928.7px;top:537.8px;width:188.79999999999995px;height:16.2px;background:linear-gradient(#b5c9e8,#a5bde3 50%,#9db6de);border-left:1px solid #c9d7ec;box-sizing:border-box;"></div>
<div style="position:absolute;left:933px;top:539.6px;width:42px;height:13px;background:linear-gradient(#e6edf8,#cfdcef);border:1px solid #b6c6de;box-sizing:border-box;border-radius:1px;"></div>
<div style="position:absolute;left:933.5px;top:540px;width:14px;height:12.3px;background:linear-gradient(#fbe6a6,#f5cd6b);"></div>
<svg style="position:absolute;left:935.5px;top:541.5px" width="10" height="9"><rect x="0" y="0" width="10" height="9" fill="#fff8e0" stroke="#8a7a5a" stroke-width="0.6"/><path d="M0,3 L10,3 M0,6 L10,6 M3.3,0 L3.3,9 M6.6,0 L6.6,9" stroke="#8a7a5a" stroke-width="0.6"/></svg>
<svg style="position:absolute;left:949.5px;top:540.5px" width="12" height="11"><rect x="0.5" y="0.5" width="11" height="10" fill="#9a9a9a" stroke="#6e6e6e" stroke-width="0.8"/><rect x="3" y="2" width="6" height="7" fill="#e4e4e4" stroke="#7a7a7a" stroke-width="0.5"/></svg>
<svg style="position:absolute;left:962.5px;top:540.5px" width="12" height="11"><rect x="0.5" y="0.5" width="11" height="10" fill="#bdbdbd" stroke="#6e6e6e" stroke-width="0.8"/><rect x="2.5" y="2" width="3" height="6" fill="#f0f0f0" stroke="#555" stroke-width="0.6"/><rect x="6.5" y="2" width="3" height="6" fill="#f0f0f0" stroke="#555" stroke-width="0.6"/><path d="M2,8.5 L10,8.5" stroke="#333" stroke-width="1"/></svg>
<div style="position:absolute;left:982.5px;top:545.6px;white-space:nowrap;line-height:1;transform:translateY(-50%);font-family:'Liberation Sans',sans-serif;font-size:9.8px;color:#2c4677;">100%</div>
<svg style="position:absolute;left:1013px;top:539.5px" width="13" height="13"><circle cx="6.2" cy="6.2" r="5.5" fill="#eef2f8" stroke="#7888a0" stroke-width="0.9"/><path d="M3.5,6.2 L9,6.2" stroke="#333" stroke-width="1.4"/></svg>
<div style="position:absolute;left:1026px;top:545.6px;width:76px;height:0.8px;background:#7d93b6;"></div>
<div style="position:absolute;left:1026px;top:546.4px;width:76px;height:0.8px;background:#d6e1f1;"></div>
<svg style="position:absolute;left:1060px;top:540px" width="8" height="11"><path d="M0.5,0.5 L7,0.5 L7,7 L3.75,10 L0.5,7 Z" fill="#f4f7fb" stroke="#6a7a92" stroke-width="0.8"/><path d="M3.75,3 L3.75,7" stroke="#8a9ab0" stroke-width="0.8"/></svg>
<svg style="position:absolute;left:1102.5px;top:539.5px" width="13" height="13"><circle cx="6.2" cy="6.2" r="5.5" fill="#eef2f8" stroke="#7888a0" stroke-width="0.9"/><path d="M3.5,6.2 L9,6.2 M6.2,3.5 L6.2,9" stroke="#333" stroke-width="1.4"/></svg>
<div style="position:absolute;left:146px;top:554px;width:971.5px;height:30px;background:linear-gradient(#5f6f85 0,#5f6f85 1px,#b9c3d1 1.2px,#97a4b7 2.5px,#8795ab 5px,#8694aa 28px,#7d8ba0 30px);"></div>
<div style="position:absolute;left:146px;top:584px;width:971.5px;height:1px;background:#000;"></div>
<div style="position:absolute;left:153px;top:555.5px;width:28px;height:28px;border-radius:50%;background:radial-gradient(circle at 50% 70%,#6fd0f0 0,#2a86b8 30%,#0f4a72 62%,#1b3a52 80%,#6f8aa0 100%);box-shadow:0 0 0 0.8px #8fa3b8"></div>
<div style="position:absolute;left:156px;top:557px;width:22px;height:11px;border-radius:11px 11px 4px 4px;background:linear-gradient(rgba(255,255,255,0.45),rgba(255,255,255,0.08))"></div>
<svg style="position:absolute;left:159px;top:561px" width="17" height="16"><path d="M1,3 Q4.5,0.5 8,2.5 L7.5,7.5 Q4,5.5 0.8,7.8Z" fill="#f0642c"/><path d="M9,2.8 Q12.5,0.8 16,3 L15.5,8 Q12,6 8.5,7.8Z" fill="#8cc63f"/><path d="M0.7,8.8 Q4,6.5 7.4,8.6 L7,13.5 Q3.8,11.5 0.5,13.8Z" fill="#2ba3e8"/><path d="M8.4,8.8 Q12,6.8 15.4,9 L15,14 Q11.5,12 8,13.8Z" fill="#f8c032"/></svg>
<div style="position:absolute;left:192px;top:555px;width:241px;height:28.5px;border-radius:3px;background:linear-gradient(170deg,#cfd4db,#aeb7c4 45%,#9ca7b7);border:1px solid #6f7d92;box-sizing:border-box;"></div>
<div style="position:absolute;left:312.5px;top:556px;width:1px;height:27px;background:#8793a6;"></div>
<div style="position:absolute;left:313.5px;top:556px;width:1px;height:27px;background:#c4cbd6;"></div>
<div style="position:absolute;left:199.8px;top:557.8px;width:22.6px;height:22.6px;border-radius:3px;background:linear-gradient(135deg,#3d90fa,#1f6cf0);"></div>
<svg style="position:absolute;left:202.3px;top:564px" width="18" height="10"><path d="M1.5,8.5 L5.5,3 L7.5,5 L6,8.5 Z" fill="#e6efff"/><path d="M6.5,8.5 L11,2.5 L16.5,8.5 L13,8.5 L11,6 L9,8.5 Z" fill="#ffffff"/></svg>
<div style="position:absolute;left:226.0px;top:569px;white-space:nowrap;line-height:1;transform:translateY(-50%);font-family:'Liberation Sans',sans-serif;font-size:9.4px;color:#f4f6fa;">腾讯会议</div>
<div style="position:absolute;left:321px;top:557.8px;width:22.6px;height:22.6px;border-radius:3px;background:linear-gradient(135deg,#3d90fa,#1f6cf0);"></div>
<svg style="position:absolute;left:323.5px;top:564px" width="18" height="10"><path d="M1.5,8.5 L5.5,3 L7.5,5 L6,8.5 Z" fill="#e6efff"/><path d="M6.5,8.5 L11,2.5 L16.5,8.5 L13,8.5 L11,6 L9,8.5 Z" fill="#ffffff"/></svg>
<div style="position:absolute;left:347.2px;top:569px;white-space:nowrap;line-height:1;transform:translateY(-50%);font-family:'Liberation Sans',sans-serif;font-size:9.4px;color:#f4f6fa;">成员(6)</div>
<div style="position:absolute;left:436px;top:555px;width:121px;height:28.5px;border-radius:3px;background:linear-gradient(170deg,#eceef2,#d3d8df 50%,#bfc6d0);border:1px solid #7d889b;box-sizing:border-box;"></div>
<svg style="position:absolute;left:441px;top:556px" width="26" height="24"><path d="M3,3 L18,1 L23,4 L23,21 L6,23 L3,20 Z" fill="#d6ecc4" stroke="#73a85a" stroke-width="0.8"/><rect x="12" y="7" width="9" height="12" fill="#6fb04e"/><path d="M12,10 L21,10 M12,13 L21,13 M12,16 L21,16 M16,7 L16,19" stroke="#e6f3dc" stroke-width="0.9"/><path d="M5,7 L11,7 L11,17 L5,17 Z" fill="#f3f8ee"/><text x="5" y="15.5" font-family="Liberation Sans" font-weight="bold" font-size="10" fill="#2f6a2c">X</text></svg>
<div style="position:absolute;left:469.5px;top:565.5px;width:326px;height:7.5px;border-radius:4px;background:#101010;"></div>
<div style="position:absolute;left:847.5px;top:568px;white-space:nowrap;line-height:1;transform:translateY(-50%);font-family:'Liberation Mono',monospace;font-size:9.5px;color:#e4e9f1;">CH</div>
<svg style="position:absolute;left:864px;top:564px" width="12" height="8"><rect x="0.5" y="0.5" width="11" height="7" rx="1" fill="#aab3c1" stroke="#8a94a3"/><path d="M2,3 L10,3 M2,5 L10,5" stroke="#8a94a3" stroke-width="0.6"/></svg>
<div style="position:absolute;left:880px;top:562.5px;width:12px;height:12px;border-radius:50%;background:radial-gradient(circle at 40% 35%,#7d9cf5,#1c3cb5);box-shadow:0 0 0 0.8px #d0d8e8;text-align:center;font:bold 9px/12px 'Liberation Sans',sans-serif;color:#fff">?</div>
<svg style="position:absolute;left:899px;top:561px" width="8" height="14"><rect x="2" y="1" width="5" height="3.5" fill="none" stroke="#e8ecf2" stroke-width="0.8"/><rect x="1" y="2.2" width="5" height="3.5" fill="#8795ab" stroke="#e8ecf2" stroke-width="0.8"/><polygon points="1,9 7,9 4,12" fill="#e8ecf2"/></svg>
<div style="position:absolute;left:913px;top:555.5px;width:78px;height:28.5px;border-radius:8px 0 0 0;background:linear-gradient(#96a3b6,#8a98ad);border-left:1px solid #a9b5c6;border-top:1px solid #a9b5c6;box-sizing:border-box;"></div>
<div style="position:absolute;left:990.5px;top:556px;width:1.2px;height:28px;background:#66758b;"></div>
<div style="position:absolute;left:922.5px;top:561.5px;width:37px;height:15px;background:linear-gradient(#4aa54e,#2f8a36);border:1.5px solid #121a14;box-shadow:0 0 0 0.8px #c9d1dc;box-sizing:border-box;border-radius:1px;"></div>
<div style="position:absolute;left:959.5px;top:566px;width:2.5px;height:6px;background:#121a14;"></div>
<div style="position:absolute;left:941px;top:569.3px;white-space:nowrap;line-height:1;transform:translate(-50%,-50%);font-family:'Liberation Sans',sans-serif;font-size:10.5px;color:#c7efc4;">96%</div>
<svg style="position:absolute;left:968px;top:564px" width="13" height="13"><path d="M6,1 L6,6 M1.5,8 L6,5.5 L8.5,7.5" stroke="#0d0d0d" stroke-width="1.8" fill="none"/><path d="M8,7 A3,3 0 1 1 8,12.5 Z" fill="#0d0d0d"/><path d="M10,8.5 L12.5,8.5 M10,11 L12.5,11" stroke="#0d0d0d" stroke-width="1.2"/></svg>
<svg style="position:absolute;left:996px;top:568px" width="6" height="4"><polygon points="0,3.5 6,3.5 3,0" fill="#eef1f6"/></svg>
<svg style="position:absolute;left:1011px;top:561.5px" width="12" height="15"><path d="M2,1 L9,1 L9,3 L11,3 L11,14 L2,14 Z" fill="#eef1f6" stroke="#3a3a3a" stroke-width="0.8"/><rect x="4" y="4" width="4" height="6" fill="#7c8696"/></svg>
<svg style="position:absolute;left:1028px;top:562px" width="15" height="14"><path d="M1,5 L4,5 L8,1.5 L8,12.5 L4,9 L1,9 Z" fill="#eef1f6" stroke="#4a4a4a" stroke-width="0.6"/><path d="M10,4.5 Q12,7 10,9.5 M11.5,3 Q14.5,7 11.5,11" stroke="#eef1f6" stroke-width="0.9" fill="none"/></svg>
<div style="position:absolute;left:1076.8px;top:563.3px;white-space:nowrap;line-height:1;transform:translate(-50%,-50%);font-family:'Liberation Sans',sans-serif;font-size:10.2px;color:#eef2f7;">9:29 AM</div>
<div style="position:absolute;left:1077.5px;top:577.2px;white-space:nowrap;line-height:1;transform:translate(-50%,-50%);font-family:'Liberation Sans',sans-serif;font-size:10.2px;color:#eef2f7;">4/1/2022</div>
<div style="position:absolute;left:1108px;top:555.5px;width:9.5px;height:28.5px;background:linear-gradient(90deg,#56667c,#7d8ca2 40%,#66758b);border-left:1px solid #4a586c;box-sizing:border-box;"></div>
<div style="position:absolute;left:10.5px;top:116.5px;width:8px;height:8px;border-radius:50%;background:#e0923a"></div>
<div style="position:absolute;left:89px;top:18px;width:142px;height:44.5px;border-radius:3px;background:#1e1d20;"></div>
<svg style="position:absolute;left:99px;top:31px" width="25" height="18"><path d="M6,17 C1,17 0,10 5,9.5 C5,4 11,1 15,3.5 C18,0.5 24,3 22.5,8.5 C26,9.5 25.5,17 21,17 Z" fill="#fff"/></svg>
<div style="position:absolute;left:134.5px;top:40.5px;white-space:nowrap;line-height:1;transform:translateY(-50%);font-family:'Liberation Sans',sans-serif;font-size:17.5px;color:#fff;">录制中</div>
<div style="position:absolute;left:1056.5px;top:18px;width:120px;height:119px;background:linear-gradient(160deg,#434247,#333236 60%,#2c2b2f);"></div>
<svg style="position:absolute;left:1078.5px;top:40.8px" width="75" height="75"><defs><clipPath id="cc"><circle cx="37.5" cy="37.5" r="37"/></clipPath><linearGradient id="sky" x1="0" y1="0" x2="0" y2="1"><stop offset="0" stop-color="#aab6d6"/><stop offset="1" stop-color="#e6e6ee"/></linearGradient><linearGradient id="court" x1="0" y1="0" x2="0" y2="1"><stop offset="0" stop-color="#3f5a5c"/><stop offset="1" stop-color="#587072"/></linearGradient></defs><g clip-path="url(#cc)"><rect x="0" y="0" width="75" height="28" fill="url(#sky)"/><rect x="0" y="25" width="75" height="20" fill="#606a60"/><rect x="28" y="22" width="46" height="12" fill="#86685a"/><rect x="0" y="33" width="75" height="12" fill="#56625a"/><rect x="4" y="30" width="3" height="5" fill="#d8d8d8"/><rect x="0" y="44" width="75" height="2.5" fill="#c8605a"/><rect x="0" y="46.5" width="75" height="29" fill="url(#court)"/><path d="M0,12 L75,22 M12,12 L12,44 M30,15 L30,44 M58,19 L58,44" stroke="#3c424a" stroke-width="0.6"/><rect x="44.5" y="0" width="1.5" height="44" fill="#2a2c34"/><rect x="36.5" y="20" width="4.5" height="11" fill="#2f58c8"/><path d="M38,21 L40.5,11 M40,21 L42,12" stroke="#2f58c8" stroke-width="1.2"/><rect x="36.5" y="31" width="4" height="13" fill="#1e2230"/><circle cx="48" cy="11" r="1.6" fill="#a83c28"/></g><circle cx="37.5" cy="37.5" r="37" fill="none" stroke="#d0d0d6" stroke-width="1"/></svg>
<div style="position:absolute;left:1056.5px;top:99px;width:53.5px;height:38px;background:rgba(24,24,26,0.88);"></div>
<svg style="position:absolute;left:1062px;top:107px" width="22" height="22"><rect x="6" y="1" width="9" height="14" rx="4.5" fill="#fff"/><path d="M6,12 L15,12 A4.5,4.5 0 0 1 6,12 Z" fill="#78e854"/><path d="M3,10 A7.5,7.5 0 0 0 18,10" stroke="#fff" stroke-width="2" fill="none"/><rect x="9.7" y="17" width="1.8" height="4" fill="#fff"/></svg>
<div style="position:absolute;left:1089.5px;top:118.8px;white-space:nowrap;line-height:1;transform:translateY(-50%);font-family:'Liberation Sans',sans-serif;font-size:15.5px;color:#f2f2f2;">博</div>
<div style="position:absolute;left:610px;top:541px;width:15px;height:15px;border-radius:50%;background:#ffffff"></div>
<div style="position:absolute;left:639.5px;top:541px;width:15px;height:15px;border-radius:50%;background:#b4b4b4"></div></div></body></html>
